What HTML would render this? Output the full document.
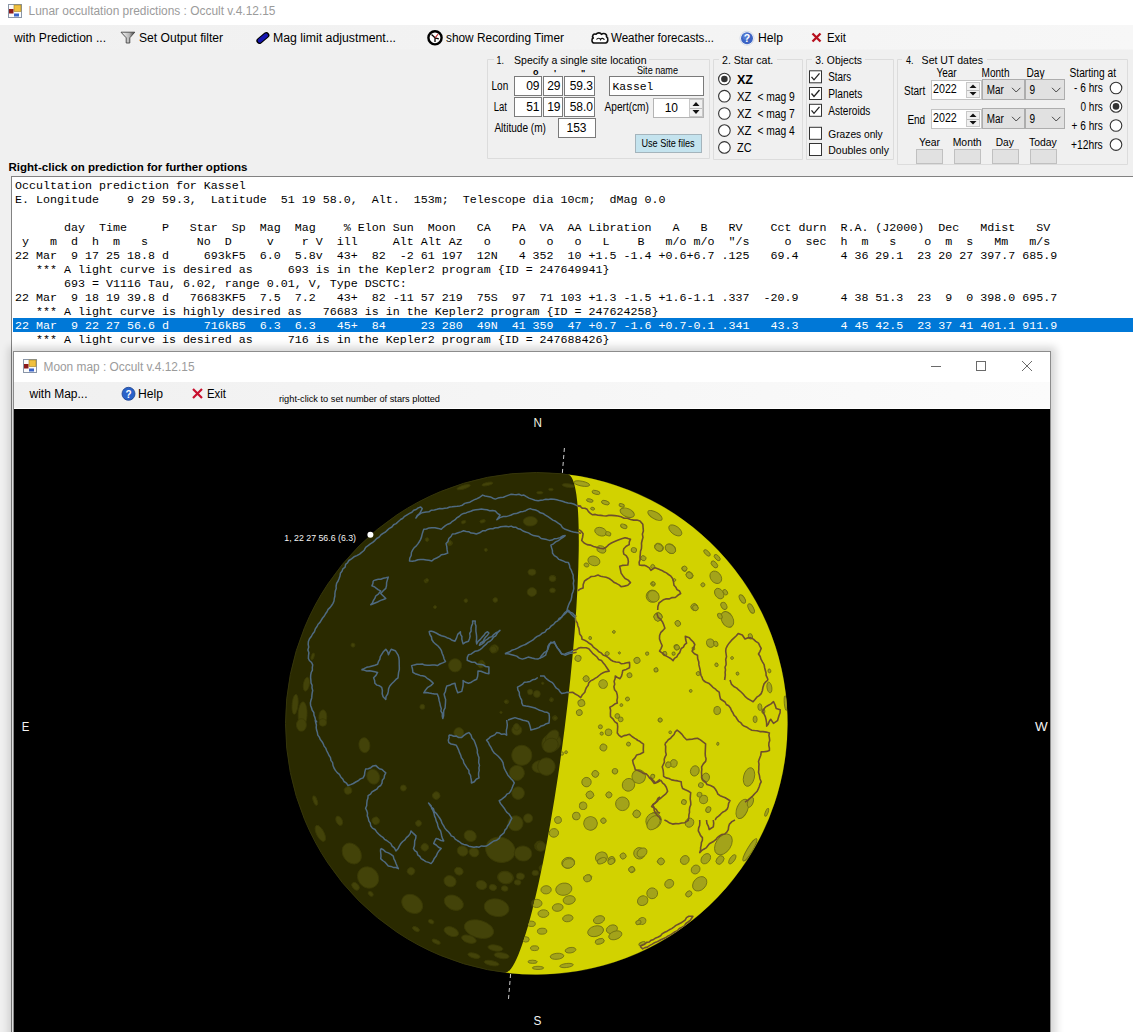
<!DOCTYPE html>
<html><head><meta charset="utf-8">
<style>
html,body{margin:0;padding:0;width:1133px;height:1032px;overflow:hidden;background:#f0f0f0;}
svg{display:block;}
text{font-family:"Liberation Sans",sans-serif;}
.mono{font-family:"Liberation Mono",monospace;font-size:11.667px;fill:#000;white-space:pre;}
</style></head><body>
<svg width="1133" height="1032" viewBox="0 0 1133 1032">
<rect x="0" y="0" width="1133" height="1032" fill="#f0f0f0"/>
<defs><linearGradient id="mbar0" x1="0" x2="1" y1="0" y2="0"><stop offset="0" stop-color="#f0f0f0"/><stop offset="0.5" stop-color="#f3f3f3"/><stop offset="1" stop-color="#f7f7f7"/></linearGradient></defs>
<rect x="0" y="0" width="1133" height="25" fill="#ffffff"/>
<rect x="0" y="25" width="1133" height="24.5" fill="url(#mbar0)"/>
<g transform="translate(8,4)"><rect x="0.5" y="0.5" width="13" height="13" fill="#fbfbfb" stroke="#8a96a8"/><rect x="6" y="1" width="7" height="6.5" fill="#f0c040" stroke="#a08020" stroke-width="0.6"/><rect x="1" y="5" width="4.5" height="4.5" fill="#8c1a1a"/><rect x="6" y="9.5" width="5" height="3" fill="#3a64c8"/></g>
<text x="28.5" y="15" style="font-size:12px;fill:#9b9b9b" textLength="247" lengthAdjust="spacingAndGlyphs"  xml:space="preserve">Lunar occultation predictions : Occult v.4.12.15</text>
<text x="14" y="42" style="font-size:12px;fill:#000" textLength="92" lengthAdjust="spacingAndGlyphs"  xml:space="preserve">with Prediction ...</text>
<defs><linearGradient id="fg" x1="0" x2="1"><stop offset="0" stop-color="#f8f8f8"/><stop offset="0.6" stop-color="#b8b8b8"/><stop offset="1" stop-color="#333"/></linearGradient></defs>
<path d="M121,32.2 L134.8,32.2 L129.8,37.8 L129.8,43 L126.2,43 L126.2,37.8 Z" fill="url(#fg)" stroke="#444" stroke-width="0.9" stroke-linejoin="round"/>
<text x="139" y="42" style="font-size:12px;fill:#000" textLength="84" lengthAdjust="spacingAndGlyphs"  xml:space="preserve">Set Output filter</text>
<path d="M259.5,40.8 L266.3,35.2" stroke="#000" stroke-width="6.2" stroke-linecap="round"/><path d="M259.7,40.6 L266.1,35.4" stroke="#1616b0" stroke-width="4" stroke-linecap="round"/>
<text x="273" y="42" style="font-size:12px;fill:#000" textLength="123" lengthAdjust="spacingAndGlyphs"  xml:space="preserve">Mag limit adjustment...</text>
<circle cx="435" cy="37.8" r="6.6" fill="#fff" stroke="#000" stroke-width="2.4"/><path d="M435,37.8 L431.5,34.5 M435,37.8 L438.8,38.8 M435,37.8 L435,42" stroke="#000" stroke-width="1.3" fill="none"/><path d="M435,37.8 L438.2,34" stroke="#c02020" stroke-width="1.1"/>
<text x="446" y="42" style="font-size:12px;fill:#000" textLength="118" lengthAdjust="spacingAndGlyphs"  xml:space="preserve">show Recording Timer</text>
<path d="M594.5,43 C591.5,43 591.2,38.8 593.3,38 C591.5,36 593.5,33.2 596,34.2 C597.5,32.3 600.5,32.5 601.5,34.3 C603.5,32.8 607.2,33.8 606.5,36.8 C608.5,37.8 608.3,42.5 605.5,43 Z" fill="#fff" stroke="#111" stroke-width="1.6" stroke-linejoin="round"/><path d="M596.5,39.5 C597.5,37.8 600,37.8 600.5,39.5 C601.5,37.8 604,38 604.2,40" fill="none" stroke="#111" stroke-width="1.2"/>
<text x="611" y="42" style="font-size:12px;fill:#000" textLength="103" lengthAdjust="spacingAndGlyphs"  xml:space="preserve">Weather forecasts...</text>
<circle cx="747" cy="38.2" r="7" fill="#fff" stroke="#c8d0e0" stroke-width="0.8"/><circle cx="747" cy="38.2" r="6" fill="#3c64c4"/><circle cx="746" cy="36.5" r="3.5" fill="#6a90e0" opacity="0.5"/>
<text x="747" y="42.3" style="font-size:10.5px;fill:#fff;font-weight:bold" text-anchor="middle"  xml:space="preserve">?</text>
<text x="758" y="42" style="font-size:12px;fill:#000" textLength="25" lengthAdjust="spacingAndGlyphs"  xml:space="preserve">Help</text>
<path d="M812.5,33.5 L820.5,41.5 M820.5,33.5 L812.5,41.5" stroke="#b8101e" stroke-width="2.3"/>
<text x="827" y="42" style="font-size:12px;fill:#000" textLength="19" lengthAdjust="spacingAndGlyphs"  xml:space="preserve">Exit</text>
<path d="M494,59.5 L487.5,59.5 L487.5,158.5 L709.5,158.5 L709.5,59.5 L649,59.5" fill="none" stroke="#dcdcdc"/>
<path d="M494,60.5 L488.5,60.5 L488.5,157.5 M708.5,60.5 L708.5,157.5" fill="none" stroke="#fff" stroke-width="1" opacity="0.0"/>
<text x="496.5" y="64" style="font-size:11.5px;fill:#000" textLength="7.5" lengthAdjust="spacingAndGlyphs"  xml:space="preserve">1.</text>
<text x="514" y="64" style="font-size:11.5px;fill:#000" textLength="132.5" lengthAdjust="spacingAndGlyphs"  xml:space="preserve">Specify a single site location</text>
<text x="533" y="74.5" style="font-size:9px;fill:#000;font-weight:bold" textLength="5.5" lengthAdjust="spacingAndGlyphs"  xml:space="preserve">o</text>
<text x="554" y="76" style="font-size:9px;fill:#000;font-weight:bold"  xml:space="preserve">'</text>
<text x="581" y="76" style="font-size:9px;fill:#000;font-weight:bold"  xml:space="preserve">"</text>
<text x="637" y="73.6" style="font-size:10.5px;fill:#000" textLength="41" lengthAdjust="spacingAndGlyphs"  xml:space="preserve">Site name</text>
<text x="491.5" y="90" style="font-size:12px;fill:#000" textLength="16.7" lengthAdjust="spacingAndGlyphs"  xml:space="preserve">Lon</text>
<text x="493.8" y="111" style="font-size:12px;fill:#000" textLength="13.2" lengthAdjust="spacingAndGlyphs"  xml:space="preserve">Lat</text>
<rect x="514.5" y="76.5" width="27" height="19" fill="#fff" stroke="#7a7a7a"/>
<rect x="543.5" y="76.5" width="19" height="19" fill="#fff" stroke="#7a7a7a"/>
<rect x="564.5" y="76.5" width="30" height="19" fill="#fff" stroke="#7a7a7a"/>
<text x="539.5" y="90" style="font-size:12px;fill:#000" text-anchor="end"  xml:space="preserve">09</text>
<text x="560.5" y="90" style="font-size:12px;fill:#000" text-anchor="end"  xml:space="preserve">29</text>
<text x="593" y="90" style="font-size:12px;fill:#000" text-anchor="end"  xml:space="preserve">59.3</text>
<rect x="514.5" y="97.5" width="27" height="19" fill="#fff" stroke="#7a7a7a"/>
<rect x="543.5" y="97.5" width="19" height="19" fill="#fff" stroke="#7a7a7a"/>
<rect x="564.5" y="97.5" width="30" height="19" fill="#fff" stroke="#7a7a7a"/>
<text x="539.5" y="111" style="font-size:12px;fill:#000" text-anchor="end"  xml:space="preserve">51</text>
<text x="560.5" y="111" style="font-size:12px;fill:#000" text-anchor="end"  xml:space="preserve">19</text>
<text x="593" y="111" style="font-size:12px;fill:#000" text-anchor="end"  xml:space="preserve">58.0</text>
<text x="494.4" y="132" style="font-size:12px;fill:#000" textLength="51.6" lengthAdjust="spacingAndGlyphs"  xml:space="preserve">Altitude (m)</text>
<rect x="558.5" y="118.5" width="37" height="19" fill="#fff" stroke="#7a7a7a"/>
<text x="586.5" y="132" style="font-size:12px;fill:#000" text-anchor="end"  xml:space="preserve">153</text>
<rect x="609.5" y="76.5" width="94" height="19" fill="#fff" stroke="#7a7a7a"/>
<text x="612.4" y="90" style="font-family:'Liberation Mono',monospace;font-size:11.6px;fill:#000" textLength="41" lengthAdjust="spacingAndGlyphs">Kassel</text>
<text x="604.6" y="111" style="font-size:12px;fill:#000" textLength="44.3" lengthAdjust="spacingAndGlyphs"  xml:space="preserve">Apert(cm)</text>
<rect x="653.5" y="98.5" width="50" height="19" fill="#fff" stroke="#b4b4b4"/>
<text x="678" y="111.5" style="font-size:12px;fill:#000" text-anchor="end"  xml:space="preserve">10</text>
<rect x="689.5" y="99.5" width="13" height="17" fill="#f0f0f0" stroke="#c8c8c8"/>
<path d="M692.5,106 L699.5,106 L696,102 Z" fill="#111"/><path d="M692.5,110 L699.5,110 L696,114 Z" fill="#111"/><path d="M690,108.5 L702,108.5" stroke="#bbb"/>
<rect x="635.5" y="134.5" width="66" height="18" fill="#c4e3ee" stroke="#a4b4bc"/>
<text x="641.4" y="147" style="font-size:10.5px;fill:#000" textLength="53.2" lengthAdjust="spacingAndGlyphs"  xml:space="preserve">Use Site files</text>
<path d="M719,59.5 L713.5,59.5 L713.5,159.5 L802.5,159.5 L802.5,59.5 L777,59.5" fill="none" stroke="#dcdcdc"/>
<path d="M719,60.5 L714.5,60.5 L714.5,158.5 M801.5,60.5 L801.5,158.5" fill="none" stroke="#fff" stroke-width="1" opacity="0.0"/>
<text x="722" y="64" style="font-size:11.5px;fill:#000" textLength="51.3" lengthAdjust="spacingAndGlyphs"  xml:space="preserve">2. Star cat.</text>
<circle cx="724.4" cy="79" r="5.8" fill="#fff" stroke="#333" stroke-width="1.1"/>
<circle cx="724.4" cy="79" r="3.3" fill="#333"/>
<text x="737" y="83.5" style="font-size:12px;fill:#000;font-weight:bold" textLength="16" lengthAdjust="spacingAndGlyphs"  xml:space="preserve">XZ</text>
<circle cx="724.4" cy="96.2" r="5.8" fill="#fff" stroke="#333" stroke-width="1.1"/>
<text x="737" y="100.7" style="font-size:12px;fill:#000" textLength="14.5" lengthAdjust="spacingAndGlyphs"  xml:space="preserve">XZ</text>
<text x="757.4" y="100.7" style="font-size:12px;fill:#000" textLength="37.4" lengthAdjust="spacingAndGlyphs"  xml:space="preserve">&lt; mag 9</text>
<circle cx="724.4" cy="113.5" r="5.8" fill="#fff" stroke="#333" stroke-width="1.1"/>
<text x="737" y="118.0" style="font-size:12px;fill:#000" textLength="14.5" lengthAdjust="spacingAndGlyphs"  xml:space="preserve">XZ</text>
<text x="757.4" y="118.0" style="font-size:12px;fill:#000" textLength="37.4" lengthAdjust="spacingAndGlyphs"  xml:space="preserve">&lt; mag 7</text>
<circle cx="724.4" cy="130.6" r="5.8" fill="#fff" stroke="#333" stroke-width="1.1"/>
<text x="737" y="135.1" style="font-size:12px;fill:#000" textLength="14.5" lengthAdjust="spacingAndGlyphs"  xml:space="preserve">XZ</text>
<text x="757.4" y="135.1" style="font-size:12px;fill:#000" textLength="37.4" lengthAdjust="spacingAndGlyphs"  xml:space="preserve">&lt; mag 4</text>
<circle cx="724.4" cy="147.4" r="5.8" fill="#fff" stroke="#333" stroke-width="1.1"/>
<text x="737" y="152" style="font-size:12px;fill:#000" textLength="14.5" lengthAdjust="spacingAndGlyphs"  xml:space="preserve">ZC</text>
<path d="M812,59.5 L806.5,59.5 L806.5,159.5 L893.5,159.5 L893.5,59.5 L865,59.5" fill="none" stroke="#dcdcdc"/>
<path d="M812,60.5 L807.5,60.5 L807.5,158.5 M892.5,60.5 L892.5,158.5" fill="none" stroke="#fff" stroke-width="1" opacity="0.0"/>
<text x="815.3" y="64" style="font-size:11.5px;fill:#000" textLength="46.7" lengthAdjust="spacingAndGlyphs"  xml:space="preserve">3. Objects</text>
<rect x="809.5" y="70.8" width="12" height="12" fill="#fff" stroke="#333"/>
<path d="M811.5,76.8 L814,79.8 L819.5,73.3" fill="none" stroke="#222" stroke-width="1.3"/>
<text x="828.3" y="81.0" style="font-size:12px;fill:#000" textLength="23" lengthAdjust="spacingAndGlyphs"  xml:space="preserve">Stars</text>
<rect x="809.5" y="87.5" width="12" height="12" fill="#fff" stroke="#333"/>
<path d="M811.5,93.5 L814,96.5 L819.5,90.0" fill="none" stroke="#222" stroke-width="1.3"/>
<text x="828.3" y="97.7" style="font-size:12px;fill:#000" textLength="34" lengthAdjust="spacingAndGlyphs"  xml:space="preserve">Planets</text>
<rect x="809.5" y="104.3" width="12" height="12" fill="#fff" stroke="#333"/>
<path d="M811.5,110.3 L814,113.3 L819.5,106.8" fill="none" stroke="#222" stroke-width="1.3"/>
<text x="828.3" y="114.5" style="font-size:12px;fill:#000" textLength="42" lengthAdjust="spacingAndGlyphs"  xml:space="preserve">Asteroids</text>
<rect x="809.5" y="127.30000000000001" width="12" height="12" fill="#fff" stroke="#333"/>
<text x="828.3" y="137.5" style="font-size:11px;fill:#000" textLength="54.4" lengthAdjust="spacingAndGlyphs"  xml:space="preserve">Grazes only</text>
<rect x="809.5" y="143.5" width="12" height="12" fill="#fff" stroke="#333"/>
<text x="828.3" y="153.7" style="font-size:11px;fill:#000" textLength="60.6" lengthAdjust="spacingAndGlyphs"  xml:space="preserve">Doubles only</text>
<path d="M902,59.5 L897.5,59.5 L897.5,164.5 L1127.5,164.5 L1127.5,59.5 L987,59.5" fill="none" stroke="#dcdcdc"/>
<path d="M902,60.5 L898.5,60.5 L898.5,163.5 M1126.5,60.5 L1126.5,163.5" fill="none" stroke="#fff" stroke-width="1" opacity="0.0"/>
<text x="906" y="64" style="font-size:11.5px;fill:#000" textLength="7.5" lengthAdjust="spacingAndGlyphs"  xml:space="preserve">4.</text>
<text x="921.6" y="64" style="font-size:11.5px;fill:#000" textLength="61.4" lengthAdjust="spacingAndGlyphs"  xml:space="preserve">Set UT dates</text>
<text x="936.4" y="77" style="font-size:12px;fill:#000" textLength="20.2" lengthAdjust="spacingAndGlyphs"  xml:space="preserve">Year</text>
<text x="981.6" y="77" style="font-size:12px;fill:#000" textLength="27.9" lengthAdjust="spacingAndGlyphs"  xml:space="preserve">Month</text>
<text x="1026.5" y="77" style="font-size:12px;fill:#000" textLength="18" lengthAdjust="spacingAndGlyphs"  xml:space="preserve">Day</text>
<text x="1069.5" y="77" style="font-size:12px;fill:#000" textLength="46.5" lengthAdjust="spacingAndGlyphs"  xml:space="preserve">Starting at</text>
<text x="904" y="94.5" style="font-size:12px;fill:#000" textLength="21.2" lengthAdjust="spacingAndGlyphs"  xml:space="preserve">Start</text>
<text x="907.4" y="123.5" style="font-size:12px;fill:#000" textLength="17.8" lengthAdjust="spacingAndGlyphs"  xml:space="preserve">End</text>
<rect x="931.5" y="80.5" width="50" height="19" fill="#fff" stroke="#c3c3c3"/>
<text x="933" y="93.3" style="font-size:12px;fill:#000" textLength="23.8" lengthAdjust="spacingAndGlyphs"  xml:space="preserve">2022</text>
<rect x="966.5" y="82.5" width="13" height="15" fill="#f0f0f0" stroke="#c8c8c8"/>
<path d="M969.5,88 L976.5,88 L973,84.5 Z" fill="#111"/><path d="M969.5,92 L976.5,92 L973,95.5 Z" fill="#111"/><path d="M967,90.5 L979,90.5" stroke="#bbb"/>
<rect x="982.5" y="79.5" width="42" height="20" fill="#e1e1e1" stroke="#adadad"/>
<rect x="1025.5" y="79.5" width="39" height="20" fill="#e1e1e1" stroke="#adadad"/>
<text x="986.7" y="93.6" style="font-size:12px;fill:#000" textLength="17" lengthAdjust="spacingAndGlyphs"  xml:space="preserve">Mar</text>
<text x="1029.4" y="93.6" style="font-size:12px;fill:#000" textLength="5.6" lengthAdjust="spacingAndGlyphs"  xml:space="preserve">9</text>
<path d="M1012,87.8 L1016.2,92 L1020.4,87.8" fill="none" stroke="#444" stroke-width="1"/>
<path d="M1052,87.8 L1056.2,92 L1060.4,87.8" fill="none" stroke="#444" stroke-width="1"/>
<rect x="931.5" y="109.5" width="50" height="19" fill="#fff" stroke="#c3c3c3"/>
<text x="933" y="122.3" style="font-size:12px;fill:#000" textLength="23.8" lengthAdjust="spacingAndGlyphs"  xml:space="preserve">2022</text>
<rect x="966.5" y="111.5" width="13" height="15" fill="#f0f0f0" stroke="#c8c8c8"/>
<path d="M969.5,117 L976.5,117 L973,113.5 Z" fill="#111"/><path d="M969.5,121 L976.5,121 L973,124.5 Z" fill="#111"/><path d="M967,119.5 L979,119.5" stroke="#bbb"/>
<rect x="982.5" y="108.5" width="42" height="20" fill="#e1e1e1" stroke="#adadad"/>
<rect x="1025.5" y="108.5" width="39" height="20" fill="#e1e1e1" stroke="#adadad"/>
<text x="986.7" y="122.6" style="font-size:12px;fill:#000" textLength="17" lengthAdjust="spacingAndGlyphs"  xml:space="preserve">Mar</text>
<text x="1029.4" y="122.6" style="font-size:12px;fill:#000" textLength="5.6" lengthAdjust="spacingAndGlyphs"  xml:space="preserve">9</text>
<path d="M1012,116.8 L1016.2,121 L1020.4,116.8" fill="none" stroke="#444" stroke-width="1"/>
<path d="M1052,116.8 L1056.2,121 L1060.4,116.8" fill="none" stroke="#444" stroke-width="1"/>
<text x="919" y="145.6" style="font-size:11px;fill:#000" textLength="21" lengthAdjust="spacingAndGlyphs"  xml:space="preserve">Year</text>
<text x="952.7" y="145.6" style="font-size:11px;fill:#000" textLength="28.9" lengthAdjust="spacingAndGlyphs"  xml:space="preserve">Month</text>
<text x="995.8" y="145.6" style="font-size:11px;fill:#000" textLength="18" lengthAdjust="spacingAndGlyphs"  xml:space="preserve">Day</text>
<text x="1029" y="145.6" style="font-size:11px;fill:#000" textLength="27.8" lengthAdjust="spacingAndGlyphs"  xml:space="preserve">Today</text>
<rect x="916.5" y="149.5" width="26" height="14" fill="#e1e1e1" stroke="#c0c0c0"/>
<rect x="954.5" y="149.5" width="26" height="14" fill="#e1e1e1" stroke="#c0c0c0"/>
<rect x="992.5" y="149.5" width="26" height="14" fill="#e1e1e1" stroke="#c0c0c0"/>
<rect x="1030.5" y="149.5" width="26" height="14" fill="#e1e1e1" stroke="#c0c0c0"/>
<circle cx="1116" cy="88" r="5.8" fill="#fff" stroke="#333" stroke-width="1.1"/>
<text x="1074" y="92.3" style="font-size:12px;fill:#000" textLength="28.7" lengthAdjust="spacingAndGlyphs"  xml:space="preserve">- 6 hrs</text>
<circle cx="1116" cy="106.4" r="5.8" fill="#fff" stroke="#333" stroke-width="1.1"/>
<circle cx="1116" cy="106.4" r="3.3" fill="#333"/>
<text x="1080.5" y="110.7" style="font-size:12px;fill:#000" textLength="22.2" lengthAdjust="spacingAndGlyphs"  xml:space="preserve">0 hrs</text>
<circle cx="1116" cy="125.5" r="5.8" fill="#fff" stroke="#333" stroke-width="1.1"/>
<text x="1071.6" y="129.8" style="font-size:12px;fill:#000" textLength="31.1" lengthAdjust="spacingAndGlyphs"  xml:space="preserve">+ 6 hrs</text>
<circle cx="1116" cy="144.6" r="5.8" fill="#fff" stroke="#333" stroke-width="1.1"/>
<text x="1071" y="148.9" style="font-size:12px;fill:#000" textLength="31.7" lengthAdjust="spacingAndGlyphs"  xml:space="preserve">+12hrs</text>
<text x="8.5" y="171" style="font-size:11.5px;fill:#000;font-weight:bold" textLength="239" lengthAdjust="spacingAndGlyphs"  xml:space="preserve">Right-click on prediction for further options</text>
<rect x="11.5" y="176.5" width="1130" height="900" fill="#fff" stroke="#828282"/>
<rect x="13" y="318" width="1120" height="14" fill="#0078d7"/>
<g class="mono">
<text x="15" y="189" class="mono" xml:space="preserve">Occultation prediction for Kassel</text>
<text x="15" y="203" class="mono" xml:space="preserve">E. Longitude    9 29 59.3,  Latitude  51 19 58.0,  Alt.  153m;  Telescope dia 10cm;  dMag 0.0</text>
<text x="15" y="231" class="mono" xml:space="preserve">       day  Time     P   Star  Sp  Mag  Mag    % Elon Sun  Moon   CA   PA  VA  AA Libration   A   B   RV    Cct durn  R.A. (J2000)  Dec   Mdist   SV</text>
<text x="15" y="245" class="mono" xml:space="preserve"> y   m  d  h  m   s       No  D     v    r V  ill     Alt Alt Az   o    o   o   o   L    B   m/o m/o  "/s     o  sec  h  m   s    o  m  s   Mm   m/s</text>
<text x="15" y="259" class="mono" xml:space="preserve">22 Mar  9 17 25 18.8 d     693kF5  6.0  5.8v  43+  82  -2 61 197  12N   4 352  10 +1.5 -1.4 +0.6+6.7 .125   69.4      4 36 29.1  23 20 27 397.7 685.9</text>
<text x="15" y="273" class="mono" xml:space="preserve">   *** A light curve is desired as     693 is in the Kepler2 program {ID = 247649941}</text>
<text x="15" y="287" class="mono" xml:space="preserve">       693 = V1116 Tau, 6.02, range 0.01, V, Type DSCTC:</text>
<text x="15" y="301" class="mono" xml:space="preserve">22 Mar  9 18 19 39.8 d   76683KF5  7.5  7.2   43+  82 -11 57 219  75S  97  71 103 +1.3 -1.5 +1.6-1.1 .337  -20.9      4 38 51.3  23  9  0 398.0 695.7</text>
<text x="15" y="315" class="mono" xml:space="preserve">   *** A light curve is highly desired as   76683 is in the Kepler2 program {ID = 247624258}</text>
<text x="15" y="329" class="mono" style="fill:#fff" xml:space="preserve">22 Mar  9 22 27 56.6 d     716kB5  6.3  6.3   45+  84     23 280  49N  41 359  47 +0.7 -1.6 +0.7-0.1 .341   43.3      4 45 42.5  23 37 41 401.1 911.9</text>
<text x="15" y="343" class="mono" xml:space="preserve">   *** A light curve is desired as     716 is in the Kepler2 program {ID = 247688426}</text>
</g>
<defs><linearGradient id="shad" x1="0" x2="1" y1="0" y2="0"><stop offset="0" stop-color="#000" stop-opacity="0.18"/><stop offset="1" stop-color="#000" stop-opacity="0"/></linearGradient><linearGradient id="shadt" x1="0" x2="0" y1="1" y2="0"><stop offset="0" stop-color="#000" stop-opacity="0.10"/><stop offset="1" stop-color="#000" stop-opacity="0"/></linearGradient><linearGradient id="mbar" x1="0" x2="1" y1="0" y2="0"><stop offset="0" stop-color="#f0f0f0"/><stop offset="1" stop-color="#fbfbfb"/></linearGradient></defs>
<filter id="blur6" x="-10%" y="-10%" width="120%" height="120%"><feGaussianBlur stdDeviation="4"/></filter>
<rect x="9" y="347" width="1047" height="700" fill="#000" opacity="0.16" filter="url(#blur6)"/>
<rect x="13.5" y="351.5" width="1037" height="700" fill="#fff" stroke="#8c8c8c"/>
<rect x="14" y="382" width="1036" height="26" fill="url(#mbar)"/>
<rect x="14" y="409" width="1036" height="623" fill="#000"/>
<g transform="translate(23,359)"><rect x="0.5" y="0.5" width="13" height="13" fill="#fbfbfb" stroke="#8a96a8"/><rect x="6" y="1" width="7" height="6.5" fill="#f0c040" stroke="#a08020" stroke-width="0.6"/><rect x="1" y="5" width="4.5" height="4.5" fill="#8c1a1a"/><rect x="6" y="9.5" width="5" height="3" fill="#3a64c8"/></g>
<text x="43.5" y="371" style="font-size:12px;fill:#9b9b9b" textLength="151" lengthAdjust="spacingAndGlyphs"  xml:space="preserve">Moon map : Occult v.4.12.15</text>
<path d="M931,366.5 L941,366.5" stroke="#6a6a6a" stroke-width="1"/>
<rect x="976.5" y="361.5" width="9" height="9" fill="none" stroke="#6a6a6a"/>
<path d="M1022,361 L1032,371 M1032,361 L1022,371" stroke="#6a6a6a" stroke-width="1"/>
<text x="29.5" y="398" style="font-size:12px;fill:#000" textLength="58" lengthAdjust="spacingAndGlyphs"  xml:space="preserve">with Map...</text>
<circle cx="128.5" cy="393.8" r="6.5" fill="#2a62c9" stroke="#1b3f8a" stroke-width="0.8"/>
<text x="128.5" y="397.5" style="font-size:10px;fill:#fff;font-weight:bold" text-anchor="middle"  xml:space="preserve">?</text>
<text x="138" y="398" style="font-size:12px;fill:#000" textLength="25" lengthAdjust="spacingAndGlyphs"  xml:space="preserve">Help</text>
<path d="M193,389 L202,398 M202,389 L193,398" stroke="#c8102e" stroke-width="2.2"/>
<text x="207" y="398" style="font-size:12px;fill:#000" textLength="19" lengthAdjust="spacingAndGlyphs"  xml:space="preserve">Exit</text>
<text x="279" y="402" style="font-size:9.5px;fill:#000" textLength="161" lengthAdjust="spacingAndGlyphs"  xml:space="preserve">right-click to set number of stars plotted</text>
<text x="533.6" y="427" style="font-size:12.5px;fill:#f4f4e0" textLength="8.4" lengthAdjust="spacingAndGlyphs"  xml:space="preserve">N</text>
<text x="533.6" y="1025" style="font-size:12.5px;fill:#f4f4f4" textLength="7.9" lengthAdjust="spacingAndGlyphs"  xml:space="preserve">S</text>
<text x="21.8" y="731" style="font-size:12.5px;fill:#f4f4f4" textLength="7.6" lengthAdjust="spacingAndGlyphs"  xml:space="preserve">E</text>
<text x="1035" y="731" style="font-size:12.5px;fill:#f4f4f4" textLength="12.7" lengthAdjust="spacingAndGlyphs"  xml:space="preserve">W</text>
<defs><clipPath id="cBright"><path d="M567.96,474.48 A251.0,251.0 0 0 1 785.52,754.96 A251.0,251.0 0 0 1 505.04,972.52 A28.5,251.0 7.20 0 0 564.78,727.07 A28.5,251.0 7.20 0 0 567.96,474.48 Z"/></clipPath><clipPath id="cMoon"><circle cx="536.5" cy="723.5" r="251.0"/></clipPath><g id="dcr"><ellipse cx="455.1" cy="665.3" rx="6.6" ry="6.6" transform="rotate(-144 455.1 665.3)"/><ellipse cx="494.1" cy="648.9" rx="4.0" ry="4.5" transform="rotate(-120 494.1 648.9)"/><ellipse cx="481.5" cy="664.0" rx="3.5" ry="3.5" transform="rotate(-133 481.5 664.0)"/><ellipse cx="295.1" cy="704.3" rx="3.0" ry="10.1" transform="rotate(-175 295.1 704.3)"/><ellipse cx="302.6" cy="714.4" rx="4.5" ry="12.6" transform="rotate(-178 302.6 714.4)"/><ellipse cx="322.8" cy="716.9" rx="4.0" ry="7.1" transform="rotate(-178 322.8 716.9)"/><ellipse cx="306.4" cy="684.2" rx="3.0" ry="7.1" transform="rotate(-170 306.4 684.2)"/><ellipse cx="426.1" cy="580.9" rx="2.0" ry="2.0" transform="rotate(-128 426.1 580.9)"/><ellipse cx="353.0" cy="645.1" rx="2.0" ry="2.0" transform="rotate(-157 353.0 645.1)"/><ellipse cx="422.3" cy="706.8" rx="2.5" ry="2.5" transform="rotate(-172 422.3 706.8)"/><ellipse cx="450.0" cy="543.1" rx="2.5" ry="2.5" transform="rotate(-116 450.0 543.1)"/><ellipse cx="506.7" cy="701.8" rx="2.0" ry="2.0" transform="rotate(-144 506.7 701.8)"/><ellipse cx="312.7" cy="656.4" rx="1.5" ry="3.5" transform="rotate(-163 312.7 656.4)"/><ellipse cx="552.7" cy="578.3" rx="3.0" ry="3.0" transform="rotate(-84 552.7 578.3)"/><ellipse cx="530.3" cy="521.3" rx="4.8" ry="7.1" transform="rotate(-92 530.3 521.3)"/><ellipse cx="531.9" cy="572.2" rx="3.2" ry="4.0" transform="rotate(-92 531.9 572.2)"/><ellipse cx="552.5" cy="578.5" rx="2.9" ry="3.5" transform="rotate(-84 552.5 578.5)"/><ellipse cx="531.9" cy="592.0" rx="4.4" ry="4.8" transform="rotate(-92 531.9 592.0)"/><ellipse cx="552.5" cy="590.4" rx="2.4" ry="2.9" transform="rotate(-83 552.5 590.4)"/><ellipse cx="463.6" cy="487.1" rx="1.9" ry="7.1" transform="rotate(-107 463.6 487.1)"/><ellipse cx="487.4" cy="484.0" rx="1.6" ry="5.6" transform="rotate(-102 487.4 484.0)"/><ellipse cx="539.8" cy="492.7" rx="1.3" ry="3.2" transform="rotate(-89 539.8 492.7)"/><ellipse cx="550.9" cy="489.5" rx="1.3" ry="2.4" transform="rotate(-86 550.9 489.5)"/><ellipse cx="568.4" cy="485.6" rx="1.9" ry="6.4" transform="rotate(-82 568.4 485.6)"/><ellipse cx="482.6" cy="521.3" rx="1.6" ry="2.9" transform="rotate(-105 482.6 521.3)"/><ellipse cx="463.6" cy="522.1" rx="1.6" ry="2.4" transform="rotate(-110 463.6 522.1)"/><ellipse cx="427.0" cy="539.6" rx="1.9" ry="1.9" transform="rotate(-121 427.0 539.6)"/><ellipse cx="449.3" cy="542.8" rx="2.4" ry="2.4" transform="rotate(-116 449.3 542.8)"/><ellipse cx="485.8" cy="549.9" rx="1.6" ry="1.6" transform="rotate(-106 485.8 549.9)"/><ellipse cx="495.3" cy="600.0" rx="2.4" ry="2.4" transform="rotate(-108 495.3 600.0)"/><ellipse cx="465.9" cy="600.7" rx="1.9" ry="1.9" transform="rotate(-120 465.9 600.7)"/><ellipse cx="427.0" cy="580.1" rx="1.6" ry="1.6" transform="rotate(-127 427.0 580.1)"/><ellipse cx="435.0" cy="607.1" rx="1.6" ry="1.6" transform="rotate(-131 435.0 607.1)"/><ellipse cx="301.4" cy="725.0" rx="5.0" ry="6.3" transform="rotate(180 301.4 725.0)"/><ellipse cx="364.4" cy="745.2" rx="5.5" ry="7.6" transform="rotate(173 364.4 745.2)"/><ellipse cx="373.2" cy="776.7" rx="6.3" ry="7.6" transform="rotate(162 373.2 776.7)"/><ellipse cx="315.2" cy="800.6" rx="2.0" ry="5.0" transform="rotate(161 315.2 800.6)"/><ellipse cx="339.2" cy="820.8" rx="3.0" ry="5.0" transform="rotate(154 339.2 820.8)"/><ellipse cx="320.3" cy="833.4" rx="3.8" ry="8.8" transform="rotate(153 320.3 833.4)"/><ellipse cx="351.8" cy="853.5" rx="8.8" ry="11.3" transform="rotate(145 351.8 853.5)"/><ellipse cx="368.1" cy="877.5" rx="10.1" ry="11.3" transform="rotate(138 368.1 877.5)"/><ellipse cx="412.2" cy="903.9" rx="8.8" ry="11.3" transform="rotate(125 412.2 903.9)"/><ellipse cx="453.8" cy="902.7" rx="7.1" ry="10.1" transform="rotate(115 453.8 902.7)"/><ellipse cx="496.6" cy="907.7" rx="8.8" ry="12.6" transform="rotate(102 496.6 907.7)"/><ellipse cx="479.0" cy="929.1" rx="8.8" ry="15.1" transform="rotate(106 479.0 929.1)"/><ellipse cx="451.3" cy="931.6" rx="4.5" ry="7.6" transform="rotate(112 451.3 931.6)"/><ellipse cx="468.9" cy="939.2" rx="3.8" ry="7.6" transform="rotate(107 468.9 939.2)"/><ellipse cx="521.8" cy="755.3" rx="10.1" ry="10.1" transform="rotate(115 521.8 755.3)"/><ellipse cx="516.8" cy="772.9" rx="7.6" ry="7.6" transform="rotate(112 516.8 772.9)"/><ellipse cx="518.1" cy="793.1" rx="6.3" ry="6.3" transform="rotate(105 518.1 793.1)"/><ellipse cx="515.5" cy="823.3" rx="7.6" ry="7.6" transform="rotate(102 515.5 823.3)"/><ellipse cx="528.1" cy="818.3" rx="4.5" ry="4.5" transform="rotate(95 528.1 818.3)"/><ellipse cx="500.4" cy="849.8" rx="12.6" ry="15.1" transform="rotate(106 500.4 849.8)"/><ellipse cx="523.1" cy="853.5" rx="7.6" ry="8.8" transform="rotate(96 523.1 853.5)"/><ellipse cx="540.7" cy="766.6" rx="6.3" ry="8.8" transform="rotate(84 540.7 766.6)"/><ellipse cx="470.2" cy="835.9" rx="5.5" ry="6.3" transform="rotate(121 470.2 835.9)"/><ellipse cx="462.6" cy="851.0" rx="5.0" ry="5.5" transform="rotate(120 462.6 851.0)"/><ellipse cx="474.0" cy="852.3" rx="4.5" ry="5.0" transform="rotate(116 474.0 852.3)"/><ellipse cx="450.0" cy="881.2" rx="5.5" ry="6.3" transform="rotate(119 450.0 881.2)"/><ellipse cx="481.5" cy="885.0" rx="4.5" ry="5.5" transform="rotate(109 481.5 885.0)"/><ellipse cx="505.5" cy="877.5" rx="6.3" ry="8.1" transform="rotate(101 505.5 877.5)"/><ellipse cx="492.9" cy="887.5" rx="3.0" ry="3.8" transform="rotate(105 492.9 887.5)"/><ellipse cx="411.0" cy="871.2" rx="3.8" ry="3.8" transform="rotate(130 411.0 871.2)"/><ellipse cx="403.4" cy="788.0" rx="3.0" ry="3.0" transform="rotate(154 403.4 788.0)"/><ellipse cx="436.2" cy="795.6" rx="3.8" ry="3.8" transform="rotate(144 436.2 795.6)"/><ellipse cx="418.5" cy="823.3" rx="3.0" ry="3.0" transform="rotate(140 418.5 823.3)"/><ellipse cx="375.7" cy="820.8" rx="3.8" ry="3.8" transform="rotate(149 375.7 820.8)"/><ellipse cx="424.8" cy="847.2" rx="3.8" ry="3.8" transform="rotate(132 424.8 847.2)"/><ellipse cx="516.8" cy="730.1" rx="5.0" ry="5.0" transform="rotate(162 516.8 730.1)"/><ellipse cx="539.5" cy="846.0" rx="5.0" ry="5.0" transform="rotate(89 539.5 846.0)"/><ellipse cx="495.4" cy="948.0" rx="3.0" ry="7.6" transform="rotate(100 495.4 948.0)"/><ellipse cx="501.7" cy="955.6" rx="3.0" ry="7.6" transform="rotate(99 501.7 955.6)"/><ellipse cx="474.0" cy="955.6" rx="2.5" ry="6.3" transform="rotate(105 474.0 955.6)"/><ellipse cx="491.6" cy="963.1" rx="2.5" ry="7.6" transform="rotate(101 491.6 963.1)"/><ellipse cx="348.0" cy="790.5" rx="3.8" ry="3.8" transform="rotate(160 348.0 790.5)"/><ellipse cx="458.8" cy="871.2" rx="3.8" ry="4.5" transform="rotate(118 458.8 871.2)"/><ellipse cx="458.8" cy="732.6" rx="5.0" ry="5.0" transform="rotate(173 458.8 732.6)"/><ellipse cx="322.8" cy="722.5" rx="3.8" ry="3.8" transform="rotate(-180 322.8 722.5)"/><ellipse cx="355.5" cy="886.3" rx="3.0" ry="4.5" transform="rotate(138 355.5 886.3)"/><ellipse cx="370.7" cy="893.8" rx="2.0" ry="3.0" transform="rotate(134 370.7 893.8)"/><ellipse cx="431.1" cy="921.6" rx="2.0" ry="3.0" transform="rotate(118 431.1 921.6)"/><ellipse cx="436.2" cy="941.7" rx="2.0" ry="4.5" transform="rotate(115 436.2 941.7)"/><ellipse cx="416.0" cy="929.1" rx="2.0" ry="3.8" transform="rotate(120 416.0 929.1)"/><ellipse cx="551.4" cy="742.7" rx="8.8" ry="10.1" transform="rotate(52 551.4 742.7)"/><ellipse cx="546.4" cy="766.6" rx="8.8" ry="8.8" transform="rotate(77 546.4 766.6)"/><ellipse cx="540.1" cy="846.0" rx="5.0" ry="5.0" transform="rotate(88 540.1 846.0)"/><ellipse cx="536.3" cy="903.9" rx="5.0" ry="5.0" transform="rotate(90 536.3 903.9)"/><ellipse cx="552.2" cy="737.0" rx="5.4" ry="8.1" transform="rotate(41 552.2 737.0)"/><ellipse cx="554.9" cy="718.0" rx="2.4" ry="2.4" transform="rotate(-17 554.9 718.0)"/><ellipse cx="551.5" cy="699.7" rx="2.0" ry="2.0" transform="rotate(-58 551.5 699.7)"/><ellipse cx="550.5" cy="745.4" rx="6.8" ry="8.1" transform="rotate(57 550.5 745.4)"/><ellipse cx="541.0" cy="846.5" rx="4.7" ry="4.7" transform="rotate(88 541.0 846.5)"/><ellipse cx="543.1" cy="868.2" rx="3.4" ry="4.1" transform="rotate(87 543.1 868.2)"/><ellipse cx="493.3" cy="649.4" rx="3.4" ry="3.4" transform="rotate(-120 493.3 649.4)"/><ellipse cx="530.1" cy="692.0" rx="2.7" ry="2.7" transform="rotate(-102 530.1 692.0)"/><ellipse cx="536.9" cy="694.0" rx="3.4" ry="3.4" transform="rotate(-89 536.9 694.0)"/><ellipse cx="542.7" cy="683.3" rx="1.2" ry="1.2" transform="rotate(-81 542.7 683.3)"/><ellipse cx="551.4" cy="699.8" rx="1.5" ry="1.5" transform="rotate(-58 551.4 699.8)"/><ellipse cx="555.3" cy="718.2" rx="1.9" ry="1.9" transform="rotate(-16 555.3 718.2)"/><ellipse cx="505.9" cy="701.7" rx="1.7" ry="1.7" transform="rotate(-145 505.9 701.7)"/><ellipse cx="501.0" cy="712.4" rx="1.2" ry="1.2" transform="rotate(-163 501.0 712.4)"/><ellipse cx="516.5" cy="726.9" rx="2.9" ry="3.4" transform="rotate(170 516.5 726.9)"/><ellipse cx="480.7" cy="664.9" rx="2.9" ry="2.9" transform="rotate(-134 480.7 664.9)"/><ellipse cx="505.4" cy="877.6" rx="6.1" ry="7.5" transform="rotate(101 505.4 877.6)"/><ellipse cx="520.4" cy="876.3" rx="3.4" ry="4.1" transform="rotate(96 520.4 876.3)"/><ellipse cx="517.6" cy="882.4" rx="2.7" ry="3.4" transform="rotate(97 517.6 882.4)"/><ellipse cx="504.7" cy="888.5" rx="2.7" ry="3.4" transform="rotate(101 504.7 888.5)"/><ellipse cx="543.4" cy="868.1" rx="3.4" ry="3.4" transform="rotate(87 543.4 868.1)"/><ellipse cx="535.3" cy="872.9" rx="2.7" ry="3.4" transform="rotate(90 535.3 872.9)"/><ellipse cx="536.6" cy="903.4" rx="4.1" ry="5.4" transform="rotate(90 536.6 903.4)"/></g><g id="bcr"><ellipse cx="581.7" cy="483.6" rx="2.4" ry="8.1" transform="rotate(-79 581.7 483.6)"/><ellipse cx="596.0" cy="492.4" rx="1.9" ry="4.1" transform="rotate(-76 596.0 492.4)"/><ellipse cx="589.8" cy="500.5" rx="1.6" ry="3.4" transform="rotate(-77 589.8 500.5)"/><ellipse cx="605.4" cy="502.6" rx="2.0" ry="4.1" transform="rotate(-73 605.4 502.6)"/><ellipse cx="621.7" cy="505.3" rx="1.6" ry="2.7" transform="rotate(-69 621.7 505.3)"/><ellipse cx="627.2" cy="512.7" rx="4.1" ry="7.5" transform="rotate(-67 627.2 512.7)"/><ellipse cx="655.0" cy="515.4" rx="3.4" ry="8.1" transform="rotate(-60 655.0 515.4)"/><ellipse cx="675.3" cy="530.4" rx="4.1" ry="7.5" transform="rotate(-54 675.3 530.4)"/><ellipse cx="600.7" cy="531.7" rx="4.1" ry="6.1" transform="rotate(-71 600.7 531.7)"/><ellipse cx="608.2" cy="533.8" rx="2.0" ry="2.7" transform="rotate(-69 608.2 533.8)"/><ellipse cx="623.8" cy="526.3" rx="2.0" ry="3.4" transform="rotate(-66 623.8 526.3)"/><ellipse cx="601.4" cy="549.4" rx="3.4" ry="4.7" transform="rotate(-70 601.4 549.4)"/><ellipse cx="593.9" cy="560.9" rx="4.7" ry="6.1" transform="rotate(-71 593.9 560.9)"/><ellipse cx="586.5" cy="565.0" rx="2.0" ry="2.4" transform="rotate(-73 586.5 565.0)"/><ellipse cx="633.9" cy="550.0" rx="2.4" ry="2.7" transform="rotate(-61 633.9 550.0)"/><ellipse cx="643.4" cy="558.2" rx="2.4" ry="2.7" transform="rotate(-57 643.4 558.2)"/><ellipse cx="659.0" cy="547.3" rx="3.7" ry="4.7" transform="rotate(-55 659.0 547.3)"/><ellipse cx="670.6" cy="548.7" rx="4.3" ry="5.4" transform="rotate(-53 670.6 548.7)"/><ellipse cx="684.1" cy="569.0" rx="2.0" ry="2.7" transform="rotate(-46 684.1 569.0)"/><ellipse cx="689.6" cy="575.1" rx="3.0" ry="3.8" transform="rotate(-44 689.6 575.1)"/><ellipse cx="652.9" cy="584.0" rx="2.0" ry="2.4" transform="rotate(-50 652.9 584.0)"/><ellipse cx="652.3" cy="596.2" rx="6.1" ry="6.1" transform="rotate(-48 652.3 596.2)"/><ellipse cx="694.3" cy="607.0" rx="3.4" ry="3.4" transform="rotate(-36 694.3 607.0)"/><ellipse cx="592.6" cy="508.7" rx="1.4" ry="2.0" transform="rotate(-75 592.6 508.7)"/><ellipse cx="658.8" cy="547.5" rx="3.4" ry="4.3" transform="rotate(-55 658.8 547.5)"/><ellipse cx="670.4" cy="548.8" rx="4.1" ry="5.7" transform="rotate(-53 670.4 548.8)"/><ellipse cx="707.0" cy="552.9" rx="2.0" ry="4.1" transform="rotate(-45 707.0 552.9)"/><ellipse cx="717.2" cy="557.6" rx="2.0" ry="3.8" transform="rotate(-43 717.2 557.6)"/><ellipse cx="714.4" cy="564.4" rx="2.4" ry="4.1" transform="rotate(-42 714.4 564.4)"/><ellipse cx="715.8" cy="577.3" rx="5.2" ry="6.8" transform="rotate(-39 715.8 577.3)"/><ellipse cx="719.2" cy="593.6" rx="4.1" ry="5.7" transform="rotate(-35 719.2 593.6)"/><ellipse cx="725.3" cy="592.2" rx="2.0" ry="3.0" transform="rotate(-35 725.3 592.2)"/><ellipse cx="723.9" cy="605.8" rx="2.7" ry="3.8" transform="rotate(-32 723.9 605.8)"/><ellipse cx="727.3" cy="619.4" rx="5.7" ry="8.4" transform="rotate(-29 727.3 619.4)"/><ellipse cx="719.9" cy="616.0" rx="2.0" ry="3.0" transform="rotate(-30 719.9 616.0)"/><ellipse cx="742.3" cy="599.0" rx="2.4" ry="4.7" transform="rotate(-31 742.3 599.0)"/><ellipse cx="751.1" cy="608.5" rx="2.4" ry="5.2" transform="rotate(-28 751.1 608.5)"/><ellipse cx="684.6" cy="568.5" rx="2.4" ry="2.4" transform="rotate(-46 684.6 568.5)"/><ellipse cx="689.3" cy="575.3" rx="3.0" ry="3.4" transform="rotate(-44 689.3 575.3)"/><ellipse cx="702.9" cy="584.8" rx="2.0" ry="2.0" transform="rotate(-40 702.9 584.8)"/><ellipse cx="653.4" cy="596.3" rx="5.4" ry="6.1" transform="rotate(-47 653.4 596.3)"/><ellipse cx="658.1" cy="616.7" rx="4.1" ry="4.1" transform="rotate(-41 658.1 616.7)"/><ellipse cx="695.4" cy="607.8" rx="2.7" ry="3.0" transform="rotate(-36 695.4 607.8)"/><ellipse cx="677.8" cy="623.4" rx="2.7" ry="3.0" transform="rotate(-35 677.8 623.4)"/><ellipse cx="710.4" cy="643.1" rx="3.8" ry="4.3" transform="rotate(-25 710.4 643.1)"/><ellipse cx="715.8" cy="643.8" rx="2.0" ry="2.7" transform="rotate(-24 715.8 643.8)"/><ellipse cx="676.5" cy="647.2" rx="2.4" ry="2.7" transform="rotate(-29 676.5 647.2)"/><ellipse cx="664.2" cy="653.3" rx="1.6" ry="1.6" transform="rotate(-29 664.2 653.3)"/><ellipse cx="693.4" cy="648.5" rx="1.4" ry="1.4" transform="rotate(-26 693.4 648.5)"/><ellipse cx="716.5" cy="664.8" rx="1.6" ry="1.9" transform="rotate(-18 716.5 664.8)"/><ellipse cx="656.1" cy="669.6" rx="1.6" ry="1.6" transform="rotate(-24 656.1 669.6)"/><ellipse cx="698.2" cy="673.6" rx="2.0" ry="2.0" transform="rotate(-17 698.2 673.6)"/><ellipse cx="750.4" cy="636.3" rx="2.0" ry="2.7" transform="rotate(-22 750.4 636.3)"/><ellipse cx="652.7" cy="566.5" rx="2.0" ry="2.0" transform="rotate(-53 652.7 566.5)"/><ellipse cx="653.4" cy="583.4" rx="1.6" ry="1.6" transform="rotate(-50 653.4 583.4)"/><ellipse cx="674.4" cy="580.0" rx="1.4" ry="1.4" transform="rotate(-46 674.4 580.0)"/><ellipse cx="769.4" cy="670.9" rx="1.4" ry="2.0" transform="rotate(-13 769.4 670.9)"/><ellipse cx="737.5" cy="673.6" rx="1.4" ry="1.6" transform="rotate(-14 737.5 673.6)"/><ellipse cx="732.1" cy="658.0" rx="1.4" ry="1.4" transform="rotate(-19 732.1 658.0)"/><ellipse cx="578.0" cy="658.3" rx="3.0" ry="3.0" transform="rotate(-58 578.0 658.3)"/><ellipse cx="586.1" cy="678.7" rx="3.0" ry="3.0" transform="rotate(-42 586.1 678.7)"/><ellipse cx="603.1" cy="684.1" rx="4.3" ry="4.3" transform="rotate(-31 603.1 684.1)"/><ellipse cx="581.4" cy="703.1" rx="3.4" ry="3.4" transform="rotate(-24 581.4 703.1)"/><ellipse cx="579.3" cy="712.6" rx="3.0" ry="3.0" transform="rotate(-14 579.3 712.6)"/><ellipse cx="637.0" cy="660.4" rx="3.0" ry="3.0" transform="rotate(-32 637.0 660.4)"/><ellipse cx="629.5" cy="675.3" rx="2.4" ry="2.4" transform="rotate(-27 629.5 675.3)"/><ellipse cx="627.5" cy="699.0" rx="2.0" ry="2.0" transform="rotate(-15 627.5 699.0)"/><ellipse cx="617.3" cy="716.0" rx="2.4" ry="2.4" transform="rotate(-5 617.3 716.0)"/><ellipse cx="620.7" cy="719.4" rx="2.4" ry="2.4" transform="rotate(-3 620.7 719.4)"/><ellipse cx="608.5" cy="732.3" rx="3.4" ry="3.4" transform="rotate(7 608.5 732.3)"/><ellipse cx="600.4" cy="726.8" rx="2.0" ry="2.0" transform="rotate(3 600.4 726.8)"/><ellipse cx="601.7" cy="733.6" rx="1.6" ry="1.6" transform="rotate(9 601.7 733.6)"/><ellipse cx="656.0" cy="669.9" rx="2.0" ry="2.0" transform="rotate(-24 656.0 669.9)"/><ellipse cx="660.1" cy="720.1" rx="2.0" ry="2.0" transform="rotate(-2 660.1 720.1)"/><ellipse cx="658.0" cy="617.0" rx="4.1" ry="4.1" transform="rotate(-41 658.0 617.0)"/><ellipse cx="677.0" cy="647.5" rx="2.4" ry="2.4" transform="rotate(-28 677.0 647.5)"/><ellipse cx="664.8" cy="653.6" rx="2.0" ry="2.0" transform="rotate(-29 664.8 653.6)"/><ellipse cx="673.6" cy="653.6" rx="1.6" ry="1.6" transform="rotate(-27 673.6 653.6)"/><ellipse cx="607.2" cy="653.6" rx="2.0" ry="2.0" transform="rotate(-45 607.2 653.6)"/><ellipse cx="647.2" cy="653.6" rx="1.6" ry="1.6" transform="rotate(-32 647.2 653.6)"/><ellipse cx="613.9" cy="631.9" rx="1.4" ry="1.4" transform="rotate(-50 613.9 631.9)"/><ellipse cx="590.2" cy="638.0" rx="1.4" ry="1.4" transform="rotate(-58 590.2 638.0)"/><ellipse cx="619.4" cy="652.9" rx="1.1" ry="1.1" transform="rotate(-40 619.4 652.9)"/><ellipse cx="621.4" cy="705.1" rx="1.4" ry="1.4" transform="rotate(-12 621.4 705.1)"/><ellipse cx="670.2" cy="732.3" rx="1.4" ry="1.4" transform="rotate(4 670.2 732.3)"/><ellipse cx="717.2" cy="710.5" rx="3.4" ry="4.1" transform="rotate(-4 717.2 710.5)"/><ellipse cx="749.0" cy="777.0" rx="5.4" ry="9.5" transform="rotate(14 749.0 777.0)"/><ellipse cx="742.3" cy="808.9" rx="5.4" ry="10.2" transform="rotate(23 742.3 808.9)"/><ellipse cx="750.4" cy="802.1" rx="2.7" ry="5.4" transform="rotate(20 750.4 802.1)"/><ellipse cx="694.8" cy="770.9" rx="4.3" ry="5.2" transform="rotate(17 694.8 770.9)"/><ellipse cx="705.6" cy="777.7" rx="3.8" ry="4.7" transform="rotate(18 705.6 777.7)"/><ellipse cx="673.7" cy="763.4" rx="3.4" ry="3.8" transform="rotate(16 673.7 763.4)"/><ellipse cx="668.3" cy="764.8" rx="2.7" ry="3.0" transform="rotate(17 668.3 764.8)"/><ellipse cx="703.6" cy="799.4" rx="4.1" ry="4.3" transform="rotate(24 703.6 799.4)"/><ellipse cx="699.5" cy="794.6" rx="2.4" ry="2.4" transform="rotate(24 699.5 794.6)"/><ellipse cx="700.9" cy="785.1" rx="2.4" ry="2.4" transform="rotate(21 700.9 785.1)"/><ellipse cx="708.3" cy="809.6" rx="2.4" ry="3.0" transform="rotate(27 708.3 809.6)"/><ellipse cx="683.9" cy="802.1" rx="2.4" ry="2.4" transform="rotate(28 683.9 802.1)"/><ellipse cx="769.4" cy="687.5" rx="2.4" ry="5.4" transform="rotate(-9 769.4 687.5)"/><ellipse cx="759.9" cy="707.1" rx="2.0" ry="3.4" transform="rotate(-4 759.9 707.1)"/><ellipse cx="763.3" cy="711.2" rx="1.6" ry="2.4" transform="rotate(-3 763.3 711.2)"/><ellipse cx="755.1" cy="719.3" rx="2.0" ry="3.4" transform="rotate(-1 755.1 719.3)"/><ellipse cx="785.7" cy="703.1" rx="1.4" ry="7.5" transform="rotate(-5 785.7 703.1)"/><ellipse cx="766.7" cy="812.3" rx="1.4" ry="4.1" transform="rotate(21 766.7 812.3)"/><ellipse cx="660.2" cy="720.0" rx="2.0" ry="2.0" transform="rotate(-2 660.2 720.0)"/><ellipse cx="652.7" cy="776.3" rx="2.0" ry="2.0" transform="rotate(24 652.7 776.3)"/><ellipse cx="654.1" cy="817.0" rx="4.1" ry="5.4" transform="rotate(39 654.1 817.0)"/><ellipse cx="690.7" cy="690.9" rx="1.4" ry="1.4" transform="rotate(-12 690.7 690.9)"/><ellipse cx="717.8" cy="743.8" rx="1.1" ry="1.6" transform="rotate(6 717.8 743.8)"/><ellipse cx="603.4" cy="747.5" rx="3.4" ry="3.4" transform="rotate(20 603.4 747.5)"/><ellipse cx="628.5" cy="744.1" rx="2.0" ry="2.0" transform="rotate(13 628.5 744.1)"/><ellipse cx="595.3" cy="773.9" rx="3.4" ry="3.4" transform="rotate(41 595.3 773.9)"/><ellipse cx="615.0" cy="771.2" rx="2.7" ry="2.7" transform="rotate(31 615.0 771.2)"/><ellipse cx="586.5" cy="782.1" rx="4.7" ry="4.7" transform="rotate(50 586.5 782.1)"/><ellipse cx="589.9" cy="794.9" rx="3.8" ry="3.8" transform="rotate(53 589.9 794.9)"/><ellipse cx="608.9" cy="794.9" rx="3.0" ry="3.0" transform="rotate(45 608.9 794.9)"/><ellipse cx="583.1" cy="805.8" rx="3.8" ry="3.8" transform="rotate(60 583.1 805.8)"/><ellipse cx="622.4" cy="803.8" rx="6.8" ry="6.8" transform="rotate(43 622.4 803.8)"/><ellipse cx="628.5" cy="784.8" rx="6.1" ry="6.5" transform="rotate(34 628.5 784.8)"/><ellipse cx="638.7" cy="776.6" rx="6.8" ry="6.8" transform="rotate(27 638.7 776.6)"/><ellipse cx="636.7" cy="813.9" rx="3.8" ry="3.8" transform="rotate(42 636.7 813.9)"/><ellipse cx="653.6" cy="820.7" rx="7.5" ry="8.1" transform="rotate(40 653.6 820.7)"/><ellipse cx="576.3" cy="816.0" rx="3.8" ry="3.8" transform="rotate(67 576.3 816.0)"/><ellipse cx="590.5" cy="823.4" rx="6.8" ry="6.8" transform="rotate(62 590.5 823.4)"/><ellipse cx="603.4" cy="820.7" rx="2.7" ry="2.7" transform="rotate(55 603.4 820.7)"/><ellipse cx="558.0" cy="820.0" rx="3.4" ry="3.4" transform="rotate(77 558.0 820.0)"/><ellipse cx="553.9" cy="832.9" rx="4.3" ry="4.7" transform="rotate(81 553.9 832.9)"/><ellipse cx="568.2" cy="862.8" rx="5.4" ry="6.5" transform="rotate(77 568.2 862.8)"/><ellipse cx="601.4" cy="857.4" rx="5.4" ry="6.1" transform="rotate(64 601.4 857.4)"/><ellipse cx="611.6" cy="860.1" rx="3.4" ry="3.4" transform="rotate(61 611.6 860.1)"/><ellipse cx="623.1" cy="856.0" rx="3.0" ry="3.0" transform="rotate(57 623.1 856.0)"/><ellipse cx="639.4" cy="853.3" rx="5.7" ry="5.7" transform="rotate(52 639.4 853.3)"/><ellipse cx="631.9" cy="869.6" rx="3.0" ry="3.0" transform="rotate(57 631.9 869.6)"/><ellipse cx="587.8" cy="877.7" rx="2.7" ry="4.1" transform="rotate(72 587.8 877.7)"/><ellipse cx="562.1" cy="753.6" rx="1.6" ry="1.6" transform="rotate(50 562.1 753.6)"/><ellipse cx="566.1" cy="752.2" rx="1.4" ry="1.4" transform="rotate(44 566.1 752.2)"/><ellipse cx="659.1" cy="861.4" rx="1.4" ry="2.0" transform="rotate(48 659.1 861.4)"/><ellipse cx="653.6" cy="822.7" rx="5.4" ry="8.1" transform="rotate(40 653.6 822.7)"/><ellipse cx="689.5" cy="822.7" rx="4.1" ry="4.7" transform="rotate(33 689.5 822.7)"/><ellipse cx="723.4" cy="844.4" rx="7.5" ry="11.5" transform="rotate(33 723.4 844.4)"/><ellipse cx="749.9" cy="849.8" rx="2.7" ry="12.9" transform="rotate(31 749.9 849.8)"/><ellipse cx="732.3" cy="859.3" rx="2.4" ry="5.4" transform="rotate(35 732.3 859.3)"/><ellipse cx="720.0" cy="860.0" rx="3.4" ry="4.7" transform="rotate(37 720.0 860.0)"/><ellipse cx="705.8" cy="858.7" rx="4.1" ry="5.7" transform="rotate(39 705.8 858.7)"/><ellipse cx="684.8" cy="860.0" rx="4.1" ry="4.7" transform="rotate(43 684.8 860.0)"/><ellipse cx="695.6" cy="869.5" rx="4.1" ry="4.7" transform="rotate(43 695.6 869.5)"/><ellipse cx="699.7" cy="883.8" rx="6.1" ry="8.1" transform="rotate(44 699.7 883.8)"/><ellipse cx="688.8" cy="893.9" rx="2.7" ry="3.4" transform="rotate(48 688.8 893.9)"/><ellipse cx="669.2" cy="883.8" rx="4.1" ry="4.7" transform="rotate(50 669.2 883.8)"/><ellipse cx="652.2" cy="893.3" rx="5.4" ry="5.4" transform="rotate(56 652.2 893.3)"/><ellipse cx="642.7" cy="900.7" rx="4.7" ry="5.4" transform="rotate(59 642.7 900.7)"/><ellipse cx="642.0" cy="921.1" rx="3.4" ry="4.1" transform="rotate(62 642.0 921.1)"/><ellipse cx="661.0" cy="861.4" rx="3.4" ry="3.4" transform="rotate(48 661.0 861.4)"/><ellipse cx="642.0" cy="852.6" rx="4.1" ry="5.4" transform="rotate(51 642.0 852.6)"/><ellipse cx="642.0" cy="943.5" rx="1.4" ry="3.4" transform="rotate(64 642.0 943.5)"/><ellipse cx="568.5" cy="863.4" rx="4.7" ry="6.1" transform="rotate(77 568.5 863.4)"/><ellipse cx="601.8" cy="860.7" rx="2.7" ry="4.7" transform="rotate(65 601.8 860.7)"/><ellipse cx="611.2" cy="861.4" rx="2.7" ry="3.4" transform="rotate(62 611.2 861.4)"/><ellipse cx="631.6" cy="869.5" rx="2.7" ry="3.0" transform="rotate(57 631.6 869.5)"/><ellipse cx="587.5" cy="878.3" rx="3.4" ry="3.8" transform="rotate(72 587.5 878.3)"/><ellipse cx="563.8" cy="889.2" rx="6.1" ry="8.1" transform="rotate(81 563.8 889.2)"/><ellipse cx="546.1" cy="889.8" rx="4.1" ry="5.2" transform="rotate(87 546.1 889.8)"/><ellipse cx="569.2" cy="900.0" rx="4.3" ry="6.1" transform="rotate(80 569.2 900.0)"/><ellipse cx="557.7" cy="907.5" rx="3.8" ry="5.4" transform="rotate(83 557.7 907.5)"/><ellipse cx="543.4" cy="913.6" rx="3.8" ry="5.4" transform="rotate(88 543.4 913.6)"/><ellipse cx="567.8" cy="918.3" rx="3.4" ry="5.2" transform="rotate(81 567.8 918.3)"/><ellipse cx="599.0" cy="919.7" rx="3.8" ry="5.7" transform="rotate(72 599.0 919.7)"/><ellipse cx="595.6" cy="931.2" rx="5.2" ry="8.1" transform="rotate(74 595.6 931.2)"/><ellipse cx="611.9" cy="929.2" rx="4.1" ry="5.7" transform="rotate(70 611.9 929.2)"/><ellipse cx="615.3" cy="935.3" rx="4.1" ry="6.8" transform="rotate(70 615.3 935.3)"/><ellipse cx="599.7" cy="941.4" rx="2.7" ry="4.7" transform="rotate(74 599.7 941.4)"/><ellipse cx="542.1" cy="931.2" rx="3.0" ry="4.7" transform="rotate(88 542.1 931.2)"/><ellipse cx="570.5" cy="950.2" rx="2.7" ry="5.4" transform="rotate(81 570.5 950.2)"/><ellipse cx="557.0" cy="956.3" rx="3.0" ry="6.8" transform="rotate(85 557.0 956.3)"/><ellipse cx="534.6" cy="948.2" rx="2.4" ry="4.1" transform="rotate(90 534.6 948.2)"/><ellipse cx="532.6" cy="961.8" rx="1.6" ry="4.7" transform="rotate(91 532.6 961.8)"/><ellipse cx="538.0" cy="967.9" rx="1.6" ry="5.7" transform="rotate(90 538.0 967.9)"/><ellipse cx="566.5" cy="965.5" rx="2.0" ry="6.8" transform="rotate(83 566.5 965.5)"/><ellipse cx="638.4" cy="922.4" rx="2.0" ry="2.7" transform="rotate(63 638.4 922.4)"/><ellipse cx="531.2" cy="923.8" rx="2.7" ry="4.1" transform="rotate(92 531.2 923.8)"/><ellipse cx="536.6" cy="903.4" rx="4.1" ry="5.4" transform="rotate(90 536.6 903.4)"/><ellipse cx="525.8" cy="939.4" rx="2.7" ry="3.4" transform="rotate(93 525.8 939.4)"/></g><g id="maria"><path d="M400.1,520.0 L398.1,521.8 L396.1,523.6 L393.6,524.8 L391.9,527.0 L389.4,528.3 L387.4,530.1 L385.5,532.0 L383.0,533.3 L380.9,534.9 L379.1,537.1 L376.7,538.5 L374.8,540.6 L372.7,542.4 L370.3,543.9 L368.1,545.6 L365.7,547.4 L364.2,550.2 L361.9,552.2 L359.6,554.1 L356.8,555.6 L354.0,556.8 L351.5,558.8 L348.9,560.5 L347.6,562.7 L345.6,564.4 L345.1,567.2 L342.9,568.8 L342.0,571.3 L340.4,573.3 L340.0,576.0 L339.1,578.5 L338.1,581.0 L336.6,583.4 L336.1,586.1 L336.2,588.6 L335.3,591.0 L334.9,593.5 L334.9,596.0 L334.3,598.5 L334.0,601.0 L333.0,603.4 L331.6,605.5 L330.0,607.6 L328.1,609.4 L327.0,611.7 L325.5,613.8 L324.3,616.0 L322.6,618.0 L321.3,620.2 L320.0,622.4 L318.1,624.2 L317.0,626.5 L315.3,628.9 L314.4,631.7 L312.6,634.0 L311.3,636.5 L309.5,638.7 L308.4,641.5 L308.2,644.3 L308.7,647.1 L307.9,650.0 L308.9,652.8 L308.5,655.7 L308.4,658.5 L309.6,660.8 L311.6,662.5 L312.7,664.9 L312.3,667.5 L312.4,670.1 L311.2,672.5 L310.7,675.1 L310.6,677.7 L310.9,680.3 L311.0,682.9 L312.1,685.3 L312.0,687.9 L312.7,690.5 L312.2,692.9 L311.9,695.4 L311.7,697.9 L310.9,700.4 L310.4,702.8 L310.6,705.4 L311.5,707.8 L312.2,710.3 L313.8,712.5 L314.0,715.2 L315.0,717.6 L315.5,720.2 L317.0,722.4"/><path d="M400.0,519.7 L402.6,518.5 L404.6,516.3 L407.1,514.8 L409.5,513.4 L411.9,512.3 L413.7,510.3 L416.2,509.5 L418.2,507.9 L420.7,507.0 L422.2,508.6 L421.0,511.2 L419.5,513.7 L417.2,515.6 L415.9,518.1 L418.0,515.4 L420.7,513.4 L423.3,512.4 L426.1,511.9 L428.9,511.8 L431.4,510.2 L434.3,509.9 L437.0,509.3 L439.7,508.6 L442.3,508.7 L444.8,508.3 L447.3,508.0 L449.7,507.0 L452.2,506.8 L454.7,506.4 L457.2,506.2 L459.9,505.9 L462.4,505.2 L464.7,503.4 L467.2,502.7 L469.9,502.2 L472.1,500.8 L474.5,499.6 L477.0,498.7 L479.4,497.5 L482.6,495.1 L485.1,496.0 L487.8,496.4 L490.4,496.9 L492.8,498.2 L495.3,499.1 L497.9,498.1 L500.6,497.6 L503.4,497.2 L506.0,496.1 L508.6,495.1 L511.2,494.3 L513.8,494.6 L516.3,494.8 L518.9,494.2 L521.4,495.4 L523.9,495.1 L526.4,496.7 L529.0,498.1 L531.9,499.1 L535.0,500.2 L538.2,500.7 L540.8,500.2 L543.3,499.9 L545.8,499.2 L548.4,499.5 L550.9,499.1 L553.9,499.2 L556.8,499.8 L559.6,500.6 L562.5,501.2 L565.2,502.2 L568.1,502.9 L570.9,503.3 L573.7,504.0 L576.4,505.4 L581.1,506.2"/><path d="M581.1,533.2 L576.4,532.4 L573.5,532.0 L570.7,531.3 L568.0,530.2 L565.2,529.3 L562.5,527.7 L560.8,524.9 L558.2,523.2 L555.7,521.3 L552.9,520.1 L550.5,518.4 L548.0,516.7 L545.4,515.1 L543.0,513.4 L540.3,512.8 L538.1,511.1 L535.6,510.0 L532.8,509.6 L530.3,508.6 L527.9,509.4 L525.7,510.7 L523.3,511.4 L520.7,511.8 L518.4,512.7 L516.1,513.6 L513.5,513.8 L511.2,515.0 L508.6,515.9 L506.0,516.6 L503.3,516.5 L499.9,517.6 L496.9,519.7 L498.5,517.4 L500.1,515.0 L497.4,513.3 L495.3,511.0 L492.6,510.5 L489.7,510.7 L487.0,509.8 L484.2,509.4 L481.4,509.0 L478.6,509.4 L475.8,509.8 L473.1,510.2 L470.8,511.3 L468.4,511.9 L466.1,512.9 L463.6,513.4 L461.1,514.7 L459.1,516.5 L456.7,517.9 L454.8,519.9 L452.4,521.3 L450.4,523.2 L447.8,524.2 L445.4,525.6 L443.3,527.3 L441.3,529.3 L438.2,528.4 L435.0,527.8 L431.8,527.7 L429.1,527.9 L426.5,529.0 L423.8,529.3 L422.9,531.8 L422.1,534.4 L421.5,537.1 L420.5,539.6 L419.1,542.0 L417.7,544.1 L416.1,546.1 L414.1,547.8 L412.7,549.9 L411.4,552.5 L411.2,555.5 L409.8,558.1 L409.5,561.0 L412.4,561.2 L415.2,560.8 L417.9,559.7 L420.7,559.4 L423.5,559.5 L426.3,559.9 L429.0,560.3 L431.8,561.0 L434.0,559.1 L436.6,558.0 L439.2,556.7 L441.3,554.7 L444.6,554.3 L447.7,553.1 L447.1,549.9 L446.8,546.7 L446.1,543.6 L448.0,541.4 L448.8,538.5 L451.0,536.5 L452.4,534.0 L455.3,533.7 L458.1,532.8 L460.9,531.9 L463.6,530.8 L466.1,531.5 L468.7,531.7 L471.1,533.1 L473.8,533.2 L476.3,534.0 L479.6,532.8 L482.6,530.8 L485.3,530.8 L487.7,529.4 L490.2,528.8 L492.9,528.8 L495.3,527.7 L498.0,527.7 L500.6,526.7 L503.2,526.4 L505.9,526.2 L508.6,526.8 L511.2,526.1 L513.5,527.2 L516.1,527.3 L518.2,528.8 L520.7,529.3 L523.0,531.0 L525.7,532.0 L528.5,532.9 L530.9,534.4 L533.5,535.6 L536.2,536.0 L538.9,536.6 L541.2,538.5 L544.0,539.0 L546.7,539.6 L549.3,540.4 L552.1,540.1 L554.6,538.7 L557.4,538.4 L560.1,537.6 L562.5,536.1 L565.2,535.6 L563.0,537.4 L560.6,539.0 L558.3,540.6 L555.6,541.9 L553.5,543.8 L550.9,545.1 L551.6,547.8 L552.4,550.4 L552.5,553.1 L554.3,555.6 L556.9,557.2 L558.9,559.4 L561.3,560.2 L563.6,561.1 L565.9,562.3 L568.4,562.6 L569.5,565.1 L569.9,567.9 L571.3,570.2 L572.2,572.8 L573.2,575.3 L573.2,578.0 L573.8,580.6 L573.3,583.3 L573.6,585.9 L573.8,588.6 L573.2,591.2 L572.0,594.3 L571.6,597.6 L570.9,600.4 L569.5,602.9 L568.4,605.5 L567.4,608.6 L566.8,611.9"/><path d="M558.9,620.0 L560.8,618.1 L562.5,616.0 L564.6,614.2 L566.6,612.3 L568.4,610.3 L570.2,612.1 L572.7,613.1 L574.3,615.1 L576.4,616.6"/><path d="M373.2,580.9 L375.6,579.9 L378.2,579.3 L380.8,579.3 L383.3,578.3 L385.8,577.8 L388.3,577.1 L387.4,579.8 L386.6,582.6 L386.5,585.6 L385.8,588.4 L383.2,590.8 L380.7,593.5 L383.3,596.0 L385.8,598.5 L383.3,599.5 L380.7,600.4 L378.2,601.7 L375.7,602.7 L373.2,603.8 L370.7,604.8 L372.4,602.9 L373.4,600.5 L374.8,598.4 L375.7,596.0 L378.6,593.8 L380.7,590.9 L378.4,589.9 L376.4,588.4 L374.4,586.7 L371.9,585.9 L372.9,583.5 L373.2,580.9"/><path d="M430.5,631.0 L433.4,631.8 L436.2,633.0 L438.7,634.5 L441.4,635.8 L444.3,636.4 L446.9,637.7 L449.7,638.6 L452.2,640.3 L455.0,641.2 L456.6,637.9 L457.7,634.4 L460.4,631.7 L460.5,634.3 L461.9,636.5 L461.8,639.1 L462.4,641.5 L463.1,643.9 L465.6,642.2 L468.5,641.2 L469.5,638.7 L470.1,636.2 L469.7,633.5 L471.1,631.1 L471.0,628.5 L471.6,625.9 L472.7,623.5 L472.6,620.9 L475.3,620.9 L475.1,623.4 L476.0,626.0 L475.9,628.5 L475.9,631.1 L476.3,633.7 L476.6,636.2 L476.6,638.8 L476.3,641.4 L476.7,643.9 L478.0,641.3 L480.3,639.4 L482.1,637.1 L483.9,635.3 L485.3,633.1 L487.5,631.7 L488.9,633.1 L487.5,635.2 L485.6,637.0 L484.1,639.2 L483.0,641.5 L480.5,642.9 L479.4,645.3 L481.7,644.1 L483.8,642.7 L485.3,640.4 L487.5,639.1 L489.4,637.4 L492.0,636.6 L493.7,634.6 L495.6,633.0 L497.9,631.8 L500.0,630.4 L497.5,632.8 L495.7,635.8 L493.5,637.2 L492.0,639.5 L490.1,641.3 L487.6,642.4 L485.9,644.4 L483.9,646.1 L482.1,648.0 L480.1,649.6 L477.8,650.7 L475.2,651.2 L473.1,652.6 L471.0,654.1 L468.5,654.8 L467.3,657.4 L467.2,660.2 L469.6,661.2 L471.9,662.2 L474.7,662.2 L476.8,663.9 L479.4,664.3 L482.7,664.7 L485.6,666.5 L488.9,667.0 L488.9,670.4 L488.9,673.8 L486.1,673.3 L483.5,672.3 L480.9,671.2 L478.0,671.1 L477.9,673.8 L477.6,676.5 L476.7,679.2 L473.9,680.5 L471.4,682.2 L468.5,683.3 L465.6,682.3 L463.1,680.5 L463.2,683.3 L463.0,686.0 L462.4,688.7 L461.8,691.4 L457.7,692.8 L456.6,689.7 L455.6,686.5 L455.0,683.3 L452.2,683.9 L449.6,685.3 L446.8,686.0 L445.9,688.7 L445.4,691.5 L444.1,694.1 L444.7,696.8 L445.6,699.4 L445.5,702.3 L445.3,705.0 L445.1,707.8 L443.8,710.3 L443.6,713.1 L443.6,715.9 L442.8,718.5 L442.3,716.1 L442.4,713.5 L440.9,711.2 L441.3,708.5 L440.4,706.1 L440.0,703.6 L439.1,700.4 L438.6,697.2 L437.3,694.1 L434.6,694.0 L431.9,693.6 L429.2,693.1 L426.5,692.5 L423.8,692.8 L425.6,689.9 L427.8,687.3 L430.8,685.6 L433.3,683.3 L431.4,681.4 L429.3,679.7 L427.1,678.3 L425.1,676.5 L422.6,675.8 L420.1,675.4 L417.7,674.5 L415.2,673.7 L412.9,672.4 L412.5,669.0 L411.6,665.6 L414.2,664.9 L416.9,664.3 L419.7,664.3 L422.3,664.0 L424.7,665.1 L427.2,665.3 L429.8,665.2 L432.3,665.0 L434.8,665.1 L437.3,665.6 L439.9,664.0 L442.7,662.9 L445.5,661.6 L444.1,659.0 L443.4,656.1 L442.2,653.5 L441.4,650.7 L439.9,648.2 L438.0,646.0 L435.7,644.2 L433.6,642.2 L431.9,639.8 L431.5,637.0 L429.9,634.5 L429.2,631.7 L430.5,631.0"/><path d="M361.4,669.7 L364.0,668.6 L366.6,667.3 L369.5,666.8 L372.2,666.0 L374.9,665.2 L377.6,664.3 L378.4,661.7 L379.8,659.4 L380.3,656.7 L381.7,654.4 L383.1,652.1 L385.8,649.3 L387.6,651.8 L388.5,654.8 L389.7,652.0 L391.2,649.3 L395.3,650.7 L398.0,654.8 L398.9,657.8 L399.2,660.8 L399.2,663.9 L399.3,667.0 L399.3,669.7 L398.6,672.4 L398.3,675.1 L398.0,677.8 L395.7,679.7 L393.8,681.8 L391.7,683.8 L389.8,686.0 L388.6,688.6 L388.3,691.4 L387.6,694.2 L386.0,696.7 L385.8,699.5 L383.1,696.8 L382.2,693.7 L382.4,690.5 L381.7,687.3 L379.5,685.8 L376.9,685.1 L374.9,683.3 L374.6,680.4 L373.6,677.8 L376.0,675.4 L377.6,672.4 L374.9,671.8 L372.3,671.2 L369.6,670.7 L366.7,671.0 L364.1,670.1 L361.4,669.7"/><path d="M504.9,653.7 L507.1,652.6 L509.6,651.8 L511.7,650.3 L514.7,649.4 L517.6,648.1 L520.4,646.5 L522.9,645.4 L525.4,644.5 L527.8,643.0 L530.1,641.6 L532.7,640.2 L534.8,638.2 L537.2,636.4 L540.0,635.2"/><path d="M504.9,653.7 L507.9,653.8 L510.7,654.5 L513.6,655.2 L516.7,656.1 L519.3,658.1 L522.3,659.1 L525.3,658.2 L528.1,657.1 L532.0,658.1 L534.9,658.7 L537.8,659.1 L540.5,657.9 L543.1,656.7 L545.6,655.2 L546.5,652.3 L547.5,649.4 L547.9,646.3 L549.5,643.6 L552.0,642.9 L554.3,641.6 L555.5,644.7 L557.2,647.4 L559.1,650.4 L561.1,653.3 L565.0,655.2 L567.5,654.3 L570.0,653.3 L573.3,653.0 L576.6,652.3"/><path d="M537.8,677.5 L535.5,679.2 L532.5,679.8 L530.1,681.4 L527.2,682.1 L524.3,682.3 L522.3,684.4 L519.9,685.8 L517.5,687.2 L517.9,689.9 L519.3,692.4 L519.4,695.2 L520.4,697.8 L521.7,700.1 L521.8,702.9 L523.0,705.5 L526.0,706.1 L529.0,706.6 L532.0,707.3 L535.0,708.0 L537.3,709.1 L539.6,710.2 L541.9,710.9 L544.3,711.9 L546.8,712.2 L549.0,713.6 L549.4,716.8 L549.3,719.9 L549.0,723.0 L546.3,723.7 L543.9,725.2 L541.2,725.9 L538.9,727.6 L536.3,728.5 L533.6,729.3 L530.9,730.0 L530.3,727.2 L529.5,724.4 L528.4,721.7 L525.8,720.7 L523.0,720.3 L520.4,719.2 L517.6,718.5 L515.0,717.6 L511.5,718.8 L508.0,720.0"/><path d="M577.6,506.0 L580.2,506.4 L582.2,508.1 L584.9,508.2 L587.1,509.3 L588.5,511.6 L590.4,513.3 L592.6,514.8 L595.3,514.4 L598.0,515.2 L600.7,515.4 L603.4,515.8 L606.1,516.0 L608.8,515.4 L611.6,515.4 L614.8,515.6 L617.9,516.0 L621.1,516.8 L624.1,518.2 L627.5,518.3 L630.5,519.5 L633.7,520.1 L636.9,520.0 L640.0,520.9 L642.8,524.3 L643.1,527.7 L643.4,531.1 L642.4,534.1 L643.0,537.4 L642.1,540.5 L641.5,543.2 L641.6,546.0 L641.4,548.7 L640.5,551.3 L640.3,554.1 L640.0,556.8 L640.1,559.6 L639.1,562.2 L639.4,565.0 L641.9,565.4 L644.4,565.3 L646.8,566.3 L649.3,567.9 L650.9,570.4 L655.0,567.7 L658.4,569.0 L661.8,570.4 L664.0,571.7 L666.4,572.9 L668.5,574.5 L670.9,576.2 L672.6,578.5 L673.5,581.9 L674.0,585.3 L675.8,587.2 L677.0,589.6 L679.5,591.0 L680.7,593.5 L677.8,595.3 L675.3,597.5 L672.1,597.6 L669.1,598.9 L665.8,598.9 L663.3,599.8 L661.2,601.4 L659.0,603.0 L657.9,606.4 L657.7,610.0"/><path d="M656.8,613.3 L658.1,617.3 L660.4,619.2 L662.2,621.4 L663.7,624.7 L664.9,628.2 L663.0,630.3 L660.9,632.3 L659.6,635.5 L659.5,639.0 L660.8,642.5 L662.2,645.8 L661.0,648.6 L659.5,651.2 L662.3,653.2 L664.9,655.3 L667.8,656.9 L670.7,658.5 L673.1,660.7 L674.4,658.4 L676.8,656.9 L678.0,654.5 L679.8,652.6 L681.2,648.5 L683.4,647.1 L684.6,644.7 L686.6,643.1 L685.7,639.8 L685.3,636.3 L689.3,637.7 L691.1,639.9 L693.3,642.0 L694.8,644.5 L693.6,647.9 L692.1,651.2 L694.4,653.7 L697.5,655.3 L697.7,658.8 L698.8,662.1 L698.9,664.9 L699.6,667.6 L700.2,670.2 L700.4,672.8 L701.0,675.3 L702.2,677.6 L702.9,680.0"/><path d="M702.9,680.0 L705.5,682.0 L708.6,683.2 L711.1,685.4 L712.9,687.3 L715.2,688.8 L717.0,690.7 L719.2,692.2 L719.7,695.6 L720.5,699.0 L722.7,700.5 L725.0,702.0 L726.3,704.5 L728.7,705.8 L730.4,707.9 L731.4,710.5 L732.9,712.8 L734.1,715.3 L735.9,717.0 L737.2,719.3 L738.6,721.3 L740.8,722.7 L742.3,724.8 L744.5,726.3 L747.1,727.3 L749.3,728.9 L751.8,730.2 L754.5,730.5 L757.2,730.7 L759.9,731.6 L763.1,731.6 L766.3,732.1 L769.4,732.9 L768.9,735.4 L769.4,737.9 L769.7,740.5 L768.9,743.0 L768.8,745.5 L769.4,748.0 L769.4,750.5 L766.7,751.4 L764.0,751.8 L761.2,751.9 L760.8,755.2 L759.6,758.3 L758.5,761.4 L759.0,764.1 L758.8,766.8 L758.8,769.5 L758.5,772.3 L759.4,775.4 L759.9,778.7 L761.2,781.8 L760.0,784.0 L759.3,786.5 L758.3,788.9 L757.2,791.2 L754.9,793.5 L752.8,795.9 L750.4,798.0 L747.8,800.2 L745.0,802.1"/><path d="M579.0,529.7 L581.4,531.4 L583.1,533.8 L582.6,537.2 L581.7,540.5 L584.1,543.0 L587.1,544.6 L590.4,545.1 L593.5,546.4 L596.6,547.3 L600.0,548.2 L603.4,548.7 L606.4,547.0 L608.8,544.6 L611.4,543.0 L614.1,541.7 L617.0,540.5 L619.6,539.4 L622.4,538.6 L625.1,537.8 L627.8,538.4 L630.5,539.2 L629.3,541.8 L629.2,544.6 L626.2,546.3 L623.8,548.7 L623.3,551.4 L623.8,554.1 L626.2,555.7 L627.8,558.2 L628.4,561.6 L627.8,565.0 L625.1,565.2 L622.3,565.4 L619.7,566.3 L620.4,569.7 L621.1,573.1 L623.0,575.9 L625.1,578.5 L628.2,580.1 L630.5,582.6 L627.8,585.3 L624.5,586.1 L621.1,586.7 L619.1,584.9 L616.7,583.6 L614.3,582.6 L611.8,580.4 L609.2,578.5 L606.1,577.2 L603.3,576.8 L600.6,576.3 L598.0,575.1 L594.7,576.2 L591.2,576.5 L588.9,578.1 L586.6,579.5 L584.4,581.2 L583.2,584.5 L583.1,588.0 L580.2,589.1 L577.6,590.7"/><path d="M724.6,680.0 L725.0,677.5 L725.3,674.9 L725.1,672.3 L725.5,669.8 L725.0,667.2 L726.1,664.7 L726.0,662.1 L725.7,659.4 L726.5,656.7 L726.1,654.0 L725.7,651.2 L726.0,648.5 L727.4,645.6 L729.3,642.9 L731.4,640.4 L733.8,638.2 L736.1,636.0 L738.2,633.6 L742.3,635.0 L745.0,639.0 L747.6,637.9 L750.4,637.7 L753.4,639.1 L755.8,641.3 L758.5,643.1 L759.8,645.9 L761.2,648.5 L760.0,651.3 L758.5,654.0 L760.2,656.5 L761.1,659.4 L762.6,662.1 L764.1,664.6 L764.6,667.5 L765.3,670.2 L766.0,672.7 L766.1,675.3 L767.2,677.6 L768.0,680.0"/><path d="M730.0,680.0 L731.4,684.1 L733.8,686.5 L736.8,688.1 L738.9,690.2 L741.1,692.0 L743.1,694.0 L745.0,696.3 L747.4,698.5 L750.3,700.1 L753.1,701.7 L755.0,699.5 L756.8,697.2 L759.2,695.6 L761.2,693.6 L762.4,690.5 L763.0,687.2 L764.0,684.1 L765.8,681.8 L768.0,680.0"/><path d="M765.3,707.1 L768.1,705.5 L771.0,703.9 L773.5,701.7 L775.1,705.0 L776.2,708.5 L780.2,709.8 L780.1,712.7 L779.1,715.3 L778.3,718.0 L777.5,720.7 L773.5,723.4 L770.7,719.3 L769.2,721.5 L768.3,724.1 L766.7,726.1 L766.6,722.9 L766.1,719.8 L765.3,716.6 L764.0,713.9 L762.6,711.2 L765.3,707.1"/><path d="M540.0,635.3 L542.0,633.2 L544.9,632.1 L546.6,629.7 L549.3,628.3 L551.1,626.0 L553.6,624.4 L555.3,622.2 L557.7,620.8 L559.2,618.4 L561.7,617.1 L563.3,614.7 L564.9,612.5 L567.1,610.9 L569.4,612.3 L571.3,614.2 L573.1,616.1 L575.3,617.6 L575.6,620.5 L577.3,622.9 L577.8,625.7 L578.9,628.4 L579.3,631.2 L579.7,634.1 L581.6,636.5 L582.1,639.3 L584.7,640.2 L587.1,641.6 L589.2,643.3 L591.6,644.8 L593.1,646.8 L595.1,648.4 L597.1,649.9 L598.8,651.7 L601.1,652.9 L603.1,655.0 L605.9,656.1 L608.4,657.7 L610.5,659.7 L613.1,661.2 L615.9,662.0 L618.9,662.2 L621.4,663.8 L624.1,663.5 L626.8,662.7 L629.5,662.4 L629.7,665.1 L629.5,667.8 L626.2,669.4 L622.8,670.5 L622.2,673.4 L621.5,676.2 L620.0,678.7 L617.5,677.6 L615.3,676.0 L615.1,678.7 L614.1,681.3 L614.7,684.2 L613.9,686.8 L614.6,689.8 L616.5,692.1 L617.3,695.0 L617.5,697.7 L616.9,700.4 L617.3,703.1 L614.7,704.1 L612.4,705.9 L609.9,707.2 L610.6,710.3 L610.4,713.5 L610.5,716.7 L612.9,718.8 L614.7,721.6 L617.3,723.5 L617.7,726.6 L617.5,729.8 L617.3,733.0 L619.0,735.3 L621.4,737.0 L623.9,735.6 L626.8,735.1 L629.5,734.3 L632.0,736.5 L634.8,738.4 L637.7,740.0"/><path d="M540.0,658.3 L541.2,656.1 L542.8,654.2 L544.5,652.3 L546.9,651.1 L548.1,648.8 L549.2,645.3 L550.9,642.1 L554.9,643.4 L556.0,645.7 L557.2,648.0 L559.2,649.8 L560.6,652.0 L561.7,654.3 L565.0,653.9 L568.1,652.6 L571.2,651.6 L573.5,650.3 L576.1,649.8 L578.2,648.3 L580.7,647.5 L583.5,647.7 L586.2,647.8 L588.8,648.8 L590.7,651.1 L592.6,653.3 L594.8,655.1 L597.0,657.0 L598.6,659.4 L601.5,660.6 L603.3,662.9 L605.1,665.1 L607.2,668.2 L609.2,671.2 L606.3,671.6 L603.6,672.5 L601.1,673.9 L599.1,675.5 L597.2,677.1 L595.0,678.4 L592.9,679.8 L590.6,680.9 L588.8,682.8 L588.2,685.3 L586.5,687.4 L585.5,689.8 L584.8,692.3 L582.4,694.7 L580.7,697.7 L578.2,695.6 L575.3,694.0 L572.6,692.3 L569.8,692.5 L567.1,692.3 L564.5,693.1 L561.7,693.6 L560.0,691.8 L558.7,689.6 L556.4,688.2 L554.9,686.2 L553.6,684.1 L551.9,682.3 L549.6,681.1 L547.5,679.6 L545.6,678.0 L544.1,676.0 L540.0,676.0"/><path d="M664.9,743.8 L666.7,741.9 L668.3,739.7 L670.6,738.3 L672.2,736.3 L674.1,734.5 L675.2,731.9 L677.1,730.2 L679.7,732.1 L682.0,734.4 L683.9,737.0 L686.6,739.7 L689.3,739.4 L692.1,739.3 L694.8,738.6 L697.5,738.3 L700.4,739.9 L703.0,741.9 L705.6,743.8 L705.5,746.3 L705.4,748.8 L705.3,751.3 L705.2,753.8 L705.4,756.4 L706.1,758.9 L705.6,761.4 L703.3,763.9 L701.6,766.8 L701.8,769.5 L701.5,772.3 L701.7,775.0 L701.6,777.7 L703.1,780.1 L705.5,782.0 L707.0,784.5 L710.5,785.5 L713.8,787.2 L715.4,789.3 L716.8,791.5 L717.8,794.0 L720.1,795.7 L722.7,796.8 L725.3,797.8 L727.7,799.3 L730.0,800.7 L728.6,803.3 L728.2,806.2 L727.3,808.9 L725.3,810.9 L722.6,812.2 L720.5,814.3 L718.6,816.1 L716.5,817.7 L715.1,820.0"/><path d="M664.9,743.8 L665.7,746.4 L665.6,749.2 L665.6,752.0 L666.3,754.6 L665.1,756.9 L664.2,759.3 L664.4,762.1 L663.3,764.5 L662.2,766.8 L663.1,769.9 L663.5,773.1 L663.6,776.3 L666.1,777.9 L669.0,778.5 L671.5,779.9 L674.4,780.4 L677.8,780.9 L681.2,781.8 L681.5,785.2 L682.6,788.5 L685.3,789.8 L688.1,791.0 L690.7,792.6 L690.4,795.8 L690.2,798.9 L690.7,802.1 L690.8,804.7 L689.8,807.2 L689.4,809.8 L689.5,812.4 L688.9,814.9 L688.8,817.5 L688.0,820.0"/><path d="M650.0,777.7 L652.1,779.2 L653.8,781.1 L655.4,783.1 L658.2,781.9 L660.9,780.4 L662.5,782.8 L664.7,784.7 L666.3,787.2 L667.6,791.2 L665.8,793.9 L663.3,795.9 L660.9,798.0 L658.7,799.6 L657.0,801.7 L654.9,803.3 L652.7,804.8 L654.0,807.4 L654.2,810.4 L655.4,813.0 L657.2,815.3 L659.5,817.3 L660.9,820.0"/><path d="M636.7,740.0 L639.2,740.9 L641.3,742.6 L643.5,744.1 L643.4,746.8 L643.3,749.5 L643.5,752.2 L640.2,754.0 L636.7,754.9 L635.0,757.9 L632.6,760.4 L633.3,763.6 L634.5,766.7 L635.3,769.8 L638.1,770.6 L640.8,771.7 L643.3,773.4 L646.2,773.9 L648.0,775.7 L649.4,777.8 L651.2,779.5 L652.8,781.4 L654.3,783.4 L657.4,781.7 L660.0,779.3"/><path d="M660.0,797.0 L657.9,798.5 L656.8,800.9 L655.2,802.9 L653.1,804.4 L651.6,806.5 L653.9,807.9 L656.2,809.4 L657.6,811.9 L660.0,813.3"/><path d="M664.4,820.0 L667.2,821.3 L669.7,823.1 L672.6,824.1 L675.6,823.6 L678.7,823.8 L681.7,823.0 L684.8,822.7 L688.8,820.0"/><path d="M699.7,820.0 L699.8,822.8 L699.6,825.5 L698.6,828.1 L698.3,830.9 L699.5,833.2 L700.6,835.6 L702.4,837.6 L702.4,840.2 L701.4,842.6 L701.2,845.1 L700.6,847.6 L700.6,850.1 L699.7,852.6 L701.6,850.7 L703.8,849.2 L706.1,847.9 L707.8,845.8 L709.4,843.8 L711.6,842.5 L713.8,841.2 L715.8,839.7 L717.3,837.6 L719.5,836.0 L721.9,834.5 L724.7,834.0 L726.8,832.2 L728.3,829.7 L728.6,826.8 L729.5,824.1 L731.9,821.6 L735.0,820.0"/><path d="M706.5,820.0 L706.9,823.3 L708.4,826.3 L709.2,829.5 L713.3,826.8 L713.7,823.4 L713.3,820.0"/><path d="M640.0,946.2 L642.3,945.2 L644.7,944.3 L646.6,942.4 L649.2,942.0 L651.2,940.2 L653.6,939.4 L655.8,937.9 L658.3,937.0 L660.6,935.7 L662.4,933.6 L664.7,932.3 L667.1,931.2 L669.3,929.8 L671.7,928.6 L673.8,927.1 L675.9,925.4 L678.3,924.2 L680.7,923.1 L682.9,921.6 L685.1,920.1 L686.5,917.6 L688.8,916.3 L692.9,916.3 L690.2,920.4 L688.1,922.0 L685.9,923.5 L684.4,925.9 L682.1,927.2 L679.4,928.5 L677.4,930.8 L674.7,932.0 L672.3,933.6 L669.8,935.3 L667.5,936.3 L665.4,937.8 L663.1,938.8 L660.8,939.8 L658.6,941.0 L656.3,942.1 L653.9,943.1 L651.8,944.4 L649.5,945.6 L647.5,947.1 L644.9,947.6 L642.7,948.9 L640.0,946.2"/><path d="M315.2,720.0 L315.7,722.5 L316.4,725.0 L316.2,727.6 L316.6,730.1 L317.4,732.6 L317.8,735.1 L319.3,737.1 L320.3,739.5 L321.9,741.5 L323.2,743.7 L324.1,746.1 L325.7,748.1 L326.6,750.5 L327.8,752.8 L328.9,755.3 L330.5,757.6 L330.9,760.4 L332.6,762.6 L333.0,765.5 L334.0,768.0 L335.4,770.4 L337.2,772.6 L339.4,774.4 L340.8,776.9 L342.7,778.9 L344.0,781.5 L346.5,783.1 L348.0,785.5 L350.7,784.6 L353.3,783.5 L355.7,782.0 L358.2,780.8 L360.4,778.9 L363.1,777.9 L364.5,775.2 L364.8,772.1 L365.6,769.1 L368.3,768.7 L370.8,767.7 L373.0,765.9 L375.7,765.4 L377.5,767.1 L379.4,768.8 L382.1,769.5 L383.9,771.3 L385.8,772.9 L384.5,775.3 L384.1,778.1 L382.3,780.3 L382.0,783.1 L380.7,785.5 L378.4,786.9 L376.8,789.2 L374.4,790.5 L372.0,791.8 L370.5,794.2 L368.1,795.6 L367.9,798.2 L367.1,800.6 L366.8,803.2 L366.7,805.8 L365.6,808.2 L366.7,810.6 L367.5,813.1 L367.3,815.9 L368.3,818.3 L368.8,820.9 L370.3,823.2 L370.7,825.8 L372.4,828.1 L375.0,829.5 L376.7,831.9 L378.6,834.0 L380.7,835.9 L382.9,837.3 L384.5,839.3 L386.7,840.5 L388.7,842.0 L390.8,843.5 L392.1,846.2 L394.6,848.2 L395.9,851.0 L398.0,848.8 L399.3,846.1 L400.9,843.5 L402.7,841.5 L404.9,839.9 L406.4,837.6 L408.5,835.9 L410.2,833.6 L411.0,830.9 L413.4,833.4 L416.0,835.9 L415.7,838.5 L414.7,840.9 L414.6,843.5 L414.4,846.1 L413.5,848.5 L414.8,850.7 L417.0,852.2 L417.7,854.8 L419.8,856.4 L421.1,858.6 L423.5,860.0 L425.8,861.6 L428.6,862.4 L431.1,863.6 L433.0,861.2 L434.3,858.4 L436.2,856.1 L437.4,853.2 L439.1,850.7 L441.2,848.5 L438.5,847.2 L436.2,845.0 L433.7,843.5 L434.8,840.9 L436.2,838.4 L438.7,839.3 L441.1,840.5 L443.7,840.9 L442.5,838.6 L441.7,836.0 L441.2,833.4 L440.5,830.8 L438.8,828.5 L437.9,826.0 L437.4,823.4 L436.2,820.9 L435.6,818.3 L434.5,815.9 L434.0,813.2 L433.1,810.7 L431.7,808.3 L431.1,805.7 L428.6,803.1 L430.0,805.2 L431.7,807.2 L433.5,808.9 L434.2,811.5 L436.2,813.2 L437.9,815.6 L439.6,818.0 L441.1,820.5 L442.1,823.4 L443.7,825.8 L444.9,828.1 L446.5,830.1 L448.4,831.8 L450.0,833.7 L451.3,835.9 L453.7,836.9 L455.2,839.1 L457.3,840.5 L459.5,841.8 L461.4,843.5 L463.8,844.4 L466.4,844.9 L468.8,846.2 L471.4,846.7 L474.0,847.2 L476.5,846.7 L479.1,847.2 L481.5,845.9 L484.0,846.3 L486.6,846.0 L489.0,844.4 L491.4,842.7 L493.8,841.0 L496.8,840.2 L499.2,838.4 L500.2,836.1 L502.2,834.4 L504.1,832.7 L504.9,830.1 L506.7,828.3 L507.7,825.7 L509.4,823.4 L510.5,820.8 L511.8,818.3 L510.4,816.1 L509.0,814.0 L506.9,812.4 L505.5,810.3 L504.2,808.2 L502.3,805.8 L500.4,803.4 L499.2,800.6 L501.5,799.5 L503.4,797.9 L505.4,796.3 L506.9,794.1 L509.2,793.1 L510.9,790.7 L512.0,788.2 L513.0,785.5 L514.3,783.0 L513.0,780.8 L511.2,779.0 L509.5,777.1 L507.9,775.2 L506.7,772.9 L505.4,770.5 L504.2,768.1 L503.5,765.4 L503.0,762.7 L501.7,760.3 L500.0,758.3 L498.2,756.2 L496.2,754.5 L494.1,752.8 L492.4,750.4 L491.2,747.7 L489.5,745.2 L488.4,742.5 L486.6,740.2 L488.6,738.7 L490.4,736.9 L492.7,735.8 L495.0,734.6 L496.6,732.6 L499.2,732.9 L501.6,734.3 L504.3,733.9 L506.7,735.1 L506.4,732.6 L506.4,730.1 L507.0,727.6 L507.3,725.0 L507.0,722.5 L506.7,720.0"/><path d="M380.7,848.5 L383.4,849.8 L385.5,851.9 L388.4,852.9 L391.0,854.3 L393.3,856.1 L393.9,858.8 L395.2,861.2 L396.1,863.7 L397.2,866.2 L398.4,868.7 L396.0,867.5 L393.3,867.4 L390.9,866.4 L388.3,866.1 L386.6,864.1 L384.8,862.0 L382.6,860.5 L380.7,858.6 L381.0,856.1 L380.8,853.5 L380.5,851.0 L380.7,848.5"/><path d="M448.8,735.1 L451.4,735.3 L453.8,736.3 L456.4,736.1 L458.8,737.6 L461.4,737.6 L463.6,735.6 L466.1,733.8 L468.9,732.6 L471.0,734.9 L471.9,737.9 L474.0,740.2 L474.9,742.6 L475.8,745.1 L476.7,747.6 L477.4,750.1 L477.3,752.8 L478.1,755.3 L479.0,757.8 L478.8,760.3 L478.7,762.8 L479.5,765.4 L478.9,767.9 L479.2,770.4 L478.6,772.9 L478.6,775.4 L479.0,777.9 L476.2,779.2 L474.3,781.7 L471.4,783.0 L471.4,780.4 L470.9,777.9 L470.5,775.3 L469.0,773.0 L468.9,770.4 L467.1,768.1 L465.5,765.6 L463.9,763.1 L463.2,760.1 L461.4,757.8 L460.7,755.1 L459.5,752.7 L458.7,750.1 L457.5,747.7 L456.3,745.2 L453.7,744.6 L451.1,744.0 L448.8,742.7 L448.3,740.2 L449.1,737.6 L448.8,735.1"/></g></defs>
<circle cx="536.5" cy="723.5" r="251.0" fill="#2a2a00" stroke="#35350a" stroke-width="1"/>
<g clip-path="url(#cMoon)"><use href="#dcr" fill="#434309" stroke="#3a3a06" stroke-width="0.8"/><use href="#maria" fill="none" stroke="#4f6a80" stroke-width="1.5" stroke-linejoin="round"/></g>
<path d="M567.96,474.48 A251.0,251.0 0 0 1 785.52,754.96 A251.0,251.0 0 0 1 505.04,972.52 A28.5,251.0 7.20 0 0 564.78,727.07 A28.5,251.0 7.20 0 0 567.96,474.48 Z" fill="#d2d200"/>
<g clip-path="url(#cBright)"><use href="#bcr" fill="#a3a31a" stroke="#767612" stroke-width="0.9"/><use href="#maria" fill="none" stroke="#6e4f2c" stroke-width="1.6" stroke-linejoin="round"/></g>
<path d="M564.4,448 L562.3,474" stroke="#cfcfcf" stroke-width="1" stroke-dasharray="4,3"/>
<path d="M510.6,974 L508.5,999" stroke="#cfcfcf" stroke-width="1" stroke-dasharray="4,3"/>
<text x="284.3" y="541" style="font-size:9.5px;fill:#f4f4f4" textLength="71.7" lengthAdjust="spacingAndGlyphs"  xml:space="preserve">1, 22 27 56.6 (6.3)</text>
<circle cx="370.4" cy="534.7" r="3" fill="#fff"/>
</svg>
</body></html>
